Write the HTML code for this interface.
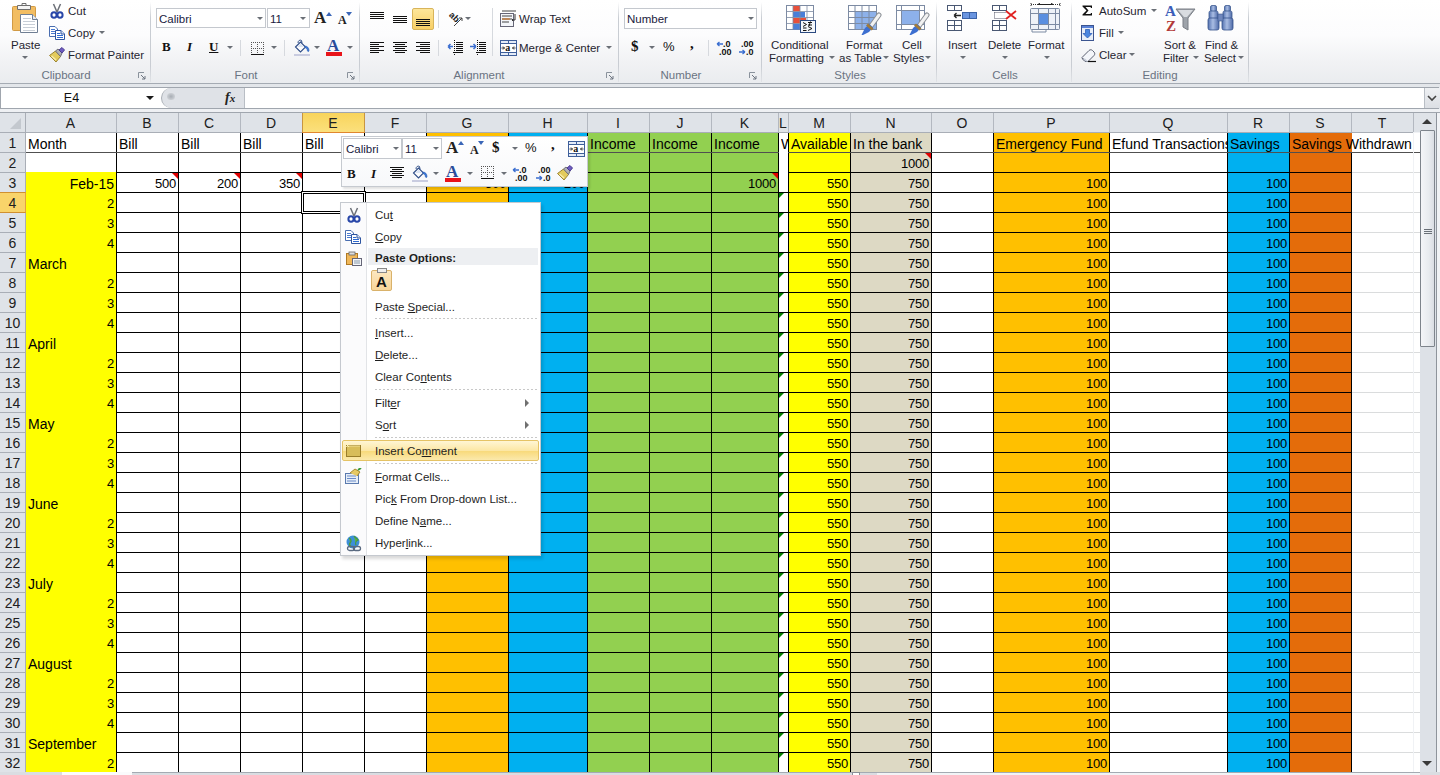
<!DOCTYPE html>
<html><head><meta charset="utf-8"><style>
*{margin:0;padding:0}
html,body{width:1440px;height:775px;overflow:hidden;background:#fff;position:relative;font-family:"Liberation Sans",sans-serif}
div,svg{position:absolute}
.gsep{position:absolute;top:2px;width:1px;height:80px;background:linear-gradient(rgba(200,204,210,0),#C9CDD3 20%,#C9CDD3 80%,rgba(200,204,210,0.3))}
.glbl{position:absolute;top:68px;height:14px;text-align:center;font:11.5px "Liberation Sans",sans-serif;line-height:14px;color:#6A7382;white-space:nowrap}
.lnch{position:absolute;top:72px}
.rt{position:absolute;font:11.5px "Liberation Sans",sans-serif;color:#1F2430;white-space:nowrap;line-height:14px}
.arr{position:absolute;width:0;height:0;border-left:3px solid transparent;border-right:3px solid transparent;border-top:3px solid #6A6F76}
.cbox{position:absolute;background:#fff;border:1px solid #C4C8CE;box-sizing:border-box}
.bsep{position:absolute;width:1px;height:16px;background:#D6D9DE}
.sep{position:absolute;left:375px;width:163px;height:1px;background:repeating-linear-gradient(90deg,#C8C8C8 0 2px,transparent 2px 4px)}
.mi u{text-decoration:underline;text-underline-offset:1px}
.mi{position:absolute;left:375px;font:11.5px "Liberation Sans",sans-serif;color:#1E1E1E;white-space:nowrap;line-height:16px}
</style></head>
<body>
<!-- RIBBON -->
<div style="position:absolute;left:0;top:0;width:1440px;height:83px;background:linear-gradient(#FFFFFF 0px,#FCFCFD 35px,#F1F2F4 62px,#EAECEF 83px)"></div>
<div style="position:absolute;left:0;top:83px;width:1440px;height:1px;background:#A5ABB3"></div>
<div style="position:absolute;left:0;top:84px;width:1440px;height:29px;background:#E3E6EA"></div>
<!-- group separators -->
<div class="gsep" style="left:150px"></div>
<div class="gsep" style="left:359px"></div>
<div class="gsep" style="left:618px"></div>
<div class="gsep" style="left:761px"></div>
<div class="gsep" style="left:936px"></div>
<div class="gsep" style="left:1071px"></div>
<div class="gsep" style="left:1248px"></div>
<!-- group labels -->
<div class="glbl" style="left:40px;width:52px">Clipboard</div>
<div class="glbl" style="left:226px;width:40px">Font</div>
<div class="glbl" style="left:450px;width:58px">Alignment</div>
<div class="glbl" style="left:655px;width:52px">Number</div>
<div class="glbl" style="left:830px;width:40px">Styles</div>
<div class="glbl" style="left:990px;width:30px">Cells</div>
<div class="glbl" style="left:1138px;width:44px">Editing</div>
<!-- launchers -->
<svg class="lnch" style="left:138px" width="8" height="8"><path d="M0.5 6V0.5H6" stroke="#8A929C" fill="none"/><path d="M3 3L7 7M7 4V7H4" stroke="#6D7580" fill="none"/></svg>
<svg class="lnch" style="left:347px" width="8" height="8"><path d="M0.5 6V0.5H6" stroke="#8A929C" fill="none"/><path d="M3 3L7 7M7 4V7H4" stroke="#6D7580" fill="none"/></svg>
<svg class="lnch" style="left:606px" width="8" height="8"><path d="M0.5 6V0.5H6" stroke="#8A929C" fill="none"/><path d="M3 3L7 7M7 4V7H4" stroke="#6D7580" fill="none"/></svg>
<svg class="lnch" style="left:749px" width="8" height="8"><path d="M0.5 6V0.5H6" stroke="#8A929C" fill="none"/><path d="M3 3L7 7M7 4V7H4" stroke="#6D7580" fill="none"/></svg>

<!-- Clipboard -->
<svg style="position:absolute;left:10px;top:2px" width="32" height="32">
 <rect x="2.5" y="4.5" width="23" height="24" rx="1" fill="#F2BD62" stroke="#D19A45"/>
 <path d="M7.5 3.5H20.5V7.5H7.5Z" fill="#F4F4F4" stroke="#6E6E6E"/>
 <path d="M12 3.5V1.5H16V3.5" fill="none" stroke="#6E6E6E"/>
 <path d="M10.5 12.5H22.5L27.5 17.5V30.5H10.5Z" fill="#FFFFFF" stroke="#6F7E93"/>
 <path d="M22.5 12.5V17.5H27.5" fill="#E6EAF0" stroke="#6F7E93"/>
 <path d="M13 16.5H21M13 19.5H25M13 22.5H25M13 25.5H25M13 28.5H25" stroke="#C8CED6"/>
</svg>
<div class="rt" style="left:11px;top:38px">Paste</div>
<div class="arr" style="left:22px;top:56px"></div>
<svg style="position:absolute;left:50px;top:3px" width="14" height="16">
 <path d="M3.5 1L7 9M10.5 1L7 9" stroke="#6C7078" stroke-width="1.5" fill="none"/>
 <ellipse cx="4" cy="12" rx="2.6" ry="2.8" fill="#fff" stroke="#2846A8" stroke-width="2"/>
 <ellipse cx="10" cy="12" rx="2.6" ry="2.8" fill="#fff" stroke="#2846A8" stroke-width="2"/>
</svg>
<div class="rt" style="left:68px;top:4px">Cut</div>
<svg style="position:absolute;left:49px;top:26px" width="16" height="14">
 <path d="M0.5 0.5H6L8.5 3V10.5H0.5Z" fill="#FFFFFF" stroke="#4A6EB0"/>
 <path d="M2 3.5H6M2 5.5H7M2 7.5H7" stroke="#4A7AD0"/>
 <path d="M6.5 4.5H12L15.5 8V13.5H6.5Z" fill="#FFFFFF" stroke="#2E55A0"/>
 <path d="M12 4.5V8H15.5" fill="#DDE6F5" stroke="#2E55A0"/>
 <path d="M8 7.5H11M8 9.5H14M8 11.5H14" stroke="#2F6AD0"/>
</svg>
<div class="rt" style="left:68px;top:26px">Copy</div>
<div class="arr" style="left:99px;top:31px"></div>
<svg style="position:absolute;left:49px;top:47px" width="16" height="16">
 <path d="M0.5 8.5L6.5 4L11.5 9.5L7 15Z" fill="#E3CB5C" stroke="#9C8430"/>
 <path d="M2.5 9L7 13" stroke="#F8EBAA" stroke-width="1.5"/>
 <path d="M6.5 4L9 2L13 6L11.5 9.5Z" fill="#B0B0B8" stroke="#707078"/>
 <path d="M10 3L13 0.5L15.5 3L13 6Z" fill="#6E5CC0" stroke="#4A3A90"/>
</svg>
<div class="rt" style="left:68px;top:48px">Format Painter</div>

<!-- Font group -->
<div class="cbox" style="left:156px;top:8px;width:110px;height:20px"></div>
<div class="cbox" style="left:267px;top:8px;width:43px;height:20px"></div>
<div class="rt" style="left:159px;top:12px;color:#1a1a40">Calibri</div>
<div class="rt" style="left:270px;top:12px;color:#1a1a40">11</div>
<div class="arr" style="left:257px;top:17px"></div>
<div class="arr" style="left:300px;top:17px"></div>
<div style="position:absolute;left:314px;top:8px;font:bold 17px 'Liberation Serif',serif;color:#222">A</div>
<svg style="position:absolute;left:326px;top:12px" width="6" height="4"><path d="M0 4L3 0L6 4Z" fill="#3A66B8"/></svg>
<div style="position:absolute;left:338px;top:13px;font:bold 12px 'Liberation Serif',serif;color:#222">A</div>
<svg style="position:absolute;left:346px;top:12px" width="6" height="4"><path d="M0 0L3 4L6 0Z" fill="#3A66B8"/></svg>
<div style="position:absolute;left:162px;top:39px;font:bold 13px 'Liberation Serif',serif;color:#111">B</div>
<div style="position:absolute;left:187px;top:39px;font:italic bold 13px 'Liberation Serif',serif;color:#111">I</div>
<div style="position:absolute;left:209px;top:39px;font:bold 13px 'Liberation Serif',serif;color:#111;text-decoration:underline">U</div>
<div class="arr" style="left:227px;top:46px"></div>
<div class="bsep" style="left:240px;top:40px"></div>
<svg style="position:absolute;left:251px;top:42px" width="14" height="14">
 <path d="M0.5 0V12M6.5 0V12M12.5 0V12M0 0.5H13M0 6.5H13" stroke="#555" stroke-dasharray="1 1"/>
 <path d="M0 12.5H13" stroke="#111"/>
</svg>
<div class="arr" style="left:271px;top:46px"></div>
<div class="bsep" style="left:284px;top:40px"></div>
<svg style="position:absolute;left:294px;top:39px" width="17" height="17">
 <path d="M1.5 8L6.5 3L11.5 8L6.5 13Z" fill="#FDFDFE" stroke="#2F4E88" stroke-width="1.1"/>
 <path d="M3 8L6.5 4.5L10 8Z" fill="#DDE6F4"/>
 <path d="M4 4C4 1.5 6 0.5 7.5 1.5L8 4" stroke="#2F4E88" fill="none"/>
 <path d="M10.5 7C13.5 7 15 9 15 11.5C15 12.5 14 13 13.5 12C13 11 13.5 9.5 11.5 9Z" fill="#3A78D8" stroke="#2A5BB0" stroke-width="0.6"/>
 <rect x="0" y="15" width="16" height="2" fill="#C9CCE0"/>
</svg>
<div class="arr" style="left:314px;top:46px"></div>
<div style="position:absolute;left:327px;top:36px;font:bold 17px 'Liberation Serif',serif;color:#2A4C9A">A</div>
<div style="position:absolute;left:326px;top:52px;width:16px;height:4px;background:#E8141A"></div>
<div class="arr" style="left:347px;top:46px"></div>

<!-- Alignment -->
<svg style="position:absolute;left:370px;top:12px" width="15" height="8"><path d="M0 0.5H14M0 2.5H14M0 4.5H14M0 6.5H14" stroke="#111"/></svg>
<svg style="position:absolute;left:393px;top:16px" width="15" height="8"><path d="M0 0.5H14M0 2.5H14M0 4.5H14M0 6.5H14" stroke="#111"/></svg>
<div style="position:absolute;left:412px;top:8px;width:20px;height:20px;border:1px solid #D8B45A;border-radius:2px;background:linear-gradient(#FDE69A,#F8CF66)"></div>
<svg style="position:absolute;left:416px;top:19px" width="15" height="8"><path d="M0 0.5H14M0 2.5H14M0 4.5H14M0 6.5H14" stroke="#111"/></svg>
<div class="bsep" style="left:438px;top:10px;height:18px"></div>
<svg style="position:absolute;left:447px;top:11px" width="18" height="16">
 <text x="3" y="5" font-family="Liberation Sans" font-weight="bold" font-size="9" fill="#222" transform="rotate(45 3 3)">ab</text>
 <path d="M7 15L15 7M12 7H15V10" stroke="#444" fill="none"/>
</svg>
<div class="arr" style="left:465px;top:17px"></div>
<div class="bsep" style="left:492px;top:8px;height:48px"></div>
<svg style="position:absolute;left:370px;top:42px" width="15" height="12"><path d="M0 0.5H14M0 2.5H9M0 4.5H14M0 6.5H9M0 8.5H14M0 10.5H9" stroke="#111"/></svg>
<svg style="position:absolute;left:393px;top:42px" width="15" height="12"><path d="M0 0.5H14M2 2.5H12M0 4.5H14M2 6.5H12M0 8.5H14M2 10.5H12" stroke="#111"/></svg>
<svg style="position:absolute;left:416px;top:42px" width="15" height="12"><path d="M0 0.5H14M4 2.5H14M0 4.5H14M4 6.5H14M0 8.5H14M4 10.5H14" stroke="#111"/></svg>
<div class="bsep" style="left:438px;top:40px"></div>
<svg style="position:absolute;left:447px;top:40px" width="17" height="16">
 <path d="M9 2.5H16M9 4.5H16M9 6.5H16M9 8.5H16M9 10.5H16M6 12.5H16" stroke="#111"/>
 <path d="M7.5 0V16" stroke="#111" stroke-dasharray="1 1"/>
 <path d="M1 6.5H6M1 6.5L3.5 4M1 6.5L3.5 9" stroke="#3A6ED0" stroke-width="1.5" fill="none"/>
</svg>
<svg style="position:absolute;left:470px;top:40px" width="17" height="16">
 <path d="M9 2.5H16M9 4.5H16M9 6.5H16M9 8.5H16M9 10.5H16M6 12.5H16" stroke="#111"/>
 <path d="M7.5 0V16" stroke="#111" stroke-dasharray="1 1"/>
 <path d="M0 6.5H6M6 6.5L3.5 4M6 6.5L3.5 9" stroke="#3A6ED0" stroke-width="1.5" fill="none"/>
</svg>
<svg style="position:absolute;left:500px;top:10px" width="18" height="17">
 <rect x="0.5" y="3.5" width="13" height="13" fill="#F4F6FA" stroke="#667"/>
 <path d="M2 1H16M2 6H12M2 9H12M2 12H9" stroke="#444" stroke-width="1.2"/>
 <path d="M2 9H10" stroke="#D07A30" stroke-width="1.2"/>
 <path d="M15 4V10H12M13 9L12 10L13 11" stroke="#333" fill="none"/>
</svg>
<div class="rt" style="left:519px;top:12px">Wrap Text</div>
<svg style="position:absolute;left:500px;top:40px" width="17" height="16">
 <rect x="0.5" y="0.5" width="16" height="15" fill="#E4ECF8" stroke="#3E5F9A"/>
 <path d="M0.5 3.5H16.5M0.5 12.5H16.5M8.5 0.5V3.5M8.5 12.5V15.5" stroke="#3E5F9A"/>
 <rect x="1" y="4" width="15" height="8" fill="#fff"/>
 <text x="5.2" y="10.8" font-family="Liberation Serif" font-weight="bold" font-size="10" fill="#111">a</text>
 <path d="M1.5 8H4.5M3 6.5L4.5 8L3 9.5M15.5 8H12.5M14 6.5L12.5 8L14 9.5" stroke="#222" stroke-width="0.9" fill="none"/>
</svg>
<div class="rt" style="left:519px;top:41px">Merge &amp; Center</div>
<div class="arr" style="left:606px;top:46px"></div>

<!-- Number -->
<div class="cbox" style="left:624px;top:8px;width:133px;height:21px"></div>
<div class="rt" style="left:627px;top:12px;color:#1a1a40">Number</div>
<div class="arr" style="left:748px;top:17px"></div>
<div style="position:absolute;left:631px;top:38px;font:bold 15px 'Liberation Serif',serif;color:#111">$</div>
<div class="arr" style="left:649px;top:46px"></div>
<div style="position:absolute;left:663px;top:39px;font:13px 'Liberation Sans',sans-serif;color:#111">%</div>
<div style="position:absolute;left:690px;top:35px;font:bold 15px 'Liberation Serif',serif;color:#111">,</div>
<div class="bsep" style="left:708px;top:40px"></div>
<svg style="position:absolute;left:716px;top:40px" width="18" height="16">
 <text x="7" y="7" font-family="Liberation Sans" font-weight="bold" font-size="9" fill="#111">.0</text>
 <text x="3" y="15" font-family="Liberation Sans" font-weight="bold" font-size="9" fill="#111">.00</text>
 <path d="M1 4H7M1 4L3.5 2M1 4L3.5 6" stroke="#3A6ED0" stroke-width="1.3" fill="none"/>
</svg>
<svg style="position:absolute;left:738px;top:40px" width="18" height="16">
 <text x="3" y="7" font-family="Liberation Sans" font-weight="bold" font-size="9" fill="#111">.00</text>
 <text x="8" y="15" font-family="Liberation Sans" font-weight="bold" font-size="9" fill="#111">.0</text>
 <path d="M1 12H7M7 12L4.5 10M7 12L4.5 14" stroke="#3A6ED0" stroke-width="1.3" fill="none"/>
</svg>

<!-- Styles -->
<svg style="position:absolute;left:785px;top:5px" width="32" height="29">
 <rect x="1.5" y="0.5" width="27" height="24" fill="#fff" stroke="#7D8BA3"/>
 <rect x="8" y="1" width="7" height="5.5" fill="#E8503A"/>
 <rect x="8" y="7" width="12" height="5.5" fill="#4A7FD8"/>
 <rect x="8" y="13" width="13" height="5.5" fill="#E8503A"/>
 <rect x="8" y="19" width="7" height="5.5" fill="#4A7FD8"/>
 <path d="M8 0.5V24.5M15 0.5V24.5M22 0.5V24.5M1.5 6.5H28.5M1.5 12.5H28.5M1.5 18.5H28.5" stroke="#7D8BA3" stroke-opacity="0.8"/>
 <rect x="15.5" y="15.5" width="15" height="12" fill="#F4F7FB" stroke="#2B4A80"/>
 <path d="M18 17.5L21.5 19.5L18 21.5M18 23H21.5M18 25.5H21.5M23 17.5H27M23 20H27M25.5 16.5L24 21M23 25.5L27 23.5L23 21.5" stroke="#111" stroke-width="1" fill="none"/>
</svg>
<div class="rt" style="left:771px;top:38px">Conditional</div>
<div class="rt" style="left:769px;top:51px">Formatting</div>
<div class="arr" style="left:829px;top:56px"></div>
<svg style="position:absolute;left:848px;top:5px" width="34" height="30">
 <rect x="0.5" y="0.5" width="28" height="24" fill="#fff" stroke="#7D8BA3"/>
 <rect x="7" y="6" width="21" height="18" fill="#8DB1EA"/>
 <path d="M7 0.5V24.5M14 0.5V24.5M21 0.5V24.5M0.5 6.5H28.5M0.5 12.5H28.5M0.5 18.5H28.5" stroke="#7D8BA3"/>
 <path d="M31 10L23 21" stroke="#8A8F96" stroke-width="5" stroke-linecap="round"/>
 <path d="M31 10L23 21" stroke="#F2F2F2" stroke-width="3" stroke-linecap="round"/>
 <path d="M21.5 19L25 22.5L21 27L13 31L17 23Z" fill="#3D6FD0"/>
 <path d="M20 18.5L25.5 23.5L23.5 25.5L18 20.5Z" fill="#A07A3A"/>
</svg>
<div class="rt" style="left:846px;top:38px">Format</div>
<div class="rt" style="left:839px;top:51px">as Table</div>
<div class="arr" style="left:883px;top:56px"></div>
<svg style="position:absolute;left:896px;top:5px" width="34" height="30">
 <rect x="0.5" y="0.5" width="28" height="24" fill="#fff" stroke="#7D8BA3"/>
 <path d="M0.5 5.5H28.5M0.5 19.5H28.5M5.5 0.5V24.5M23.5 0.5V24.5" stroke="#7D8BA3"/>
 <rect x="6" y="6" width="17" height="13" fill="#8DB1EA"/>
 <path d="M31 10L23 21" stroke="#8A8F96" stroke-width="5" stroke-linecap="round"/>
 <path d="M31 10L23 21" stroke="#F2F2F2" stroke-width="3" stroke-linecap="round"/>
 <path d="M21.5 19L25 22.5L21 27L13 31L17 23Z" fill="#3D6FD0"/>
 <path d="M20 18.5L25.5 23.5L23.5 25.5L18 20.5Z" fill="#A07A3A"/>
</svg>
<div class="rt" style="left:902px;top:38px">Cell</div>
<div class="rt" style="left:893px;top:51px">Styles</div>
<div class="arr" style="left:925px;top:56px"></div>

<!-- Cells -->
<svg style="position:absolute;left:947px;top:5px" width="32" height="27">
 <rect x="0.5" y="0.5" width="14" height="5" fill="#fff" stroke="#4A5873"/>
 <path d="M7.5 0.5V5.5" stroke="#4A5873"/>
 <rect x="0.5" y="15.5" width="14" height="10" fill="#fff" stroke="#4A5873"/>
 <path d="M7.5 15.5V25.5M0.5 20.5H14.5" stroke="#4A5873"/>
 <rect x="15.5" y="7.5" width="14" height="6" fill="#6A95E0" stroke="#3B63A8"/>
 <path d="M22.5 7.5V13.5" stroke="#3B63A8"/>
 <path d="M7 10.5H14M7 10.5L9.5 8M7 10.5L9.5 13" stroke="#222" stroke-width="1.3" fill="none"/>
</svg>
<div class="rt" style="left:948px;top:38px">Insert</div>
<div class="arr" style="left:960px;top:56px"></div>
<svg style="position:absolute;left:992px;top:5px" width="26" height="27">
 <rect x="0.5" y="0.5" width="14" height="5" fill="#fff" stroke="#4A5873"/>
 <path d="M7.5 0.5V5.5" stroke="#4A5873"/>
 <rect x="0.5" y="15.5" width="14" height="10" fill="#fff" stroke="#4A5873"/>
 <path d="M7.5 15.5V25.5M0.5 20.5H14.5" stroke="#4A5873"/>
 <path d="M2.5 7.5H14.5M2.5 13.5H14.5M2.5 7.5V13.5" stroke="#556" stroke-dasharray="1 1" fill="none"/>
 <path d="M14 6L24 14M24 6L14 14" stroke="#E02020" stroke-width="1.8"/>
</svg>
<div class="rt" style="left:988px;top:38px">Delete</div>
<div class="arr" style="left:1002px;top:56px"></div>
<svg style="position:absolute;left:1030px;top:3px" width="32" height="30">
 <path d="M1 1.5H30M1 0V3M30 0V3" stroke="#333" stroke-dasharray="1 1"/>
 <path d="M8 1.5H23M8 1.5L10 0M23 1.5L21 0" stroke="#222"/>
 <rect x="0.5" y="5.5" width="29" height="21" fill="#EEF2F8" stroke="#7D8BA3" rx="1"/>
 <path d="M8.5 5.5V26.5M18.5 5.5V26.5M25.5 5.5V26.5M0.5 10.5H29.5M0.5 21.5H29.5" stroke="#7D8BA3"/>
 <rect x="9" y="11" width="9" height="10" fill="#5A8FE0"/>
 <path d="M2 27V29H16V27" stroke="#7D8BA3" fill="none"/>
</svg>
<div class="rt" style="left:1028px;top:38px">Format</div>
<div class="arr" style="left:1044px;top:56px"></div>

<!-- Editing -->
<svg style="position:absolute;left:1082px;top:5px" width="11" height="11"><path d="M0.5 0.5H10V3H9L8.5 2H3.5L6.5 5.5L3.5 9H8.5L9 8H10V10.5H0.5V9.5L4.5 5.5L0.5 1.5Z" fill="#111"/></svg>
<div class="rt" style="left:1099px;top:4px">AutoSum</div>
<div class="arr" style="left:1151px;top:9px"></div>
<svg style="position:absolute;left:1081px;top:25px" width="14" height="17">
 <rect x="0.5" y="0.5" width="12" height="15" fill="#E8EEF8" stroke="#3C5590"/>
 <rect x="1" y="1" width="11" height="2" fill="#5A82D8"/>
 <path d="M4.5 4.5H8.5V8.5H11L6.5 13L2 8.5H4.5Z" fill="#4A86E0" stroke="#2E5EB8" stroke-width="0.8"/>
</svg>
<div class="rt" style="left:1099px;top:26px">Fill</div>
<div class="arr" style="left:1118px;top:31px"></div>
<svg style="position:absolute;left:1081px;top:48px" width="16" height="15">
 <path d="M1 9.5L8 2.5C9 1.5 10.5 1.5 11.5 2.5L13 4C14 5 14 6.5 13 7.5L7 13.5H4L1.5 11Z" fill="#F4F6FA" stroke="#5A6070"/>
 <path d="M1.5 10L4.5 13" stroke="#5A6070"/>
 <path d="M2 11L5 13.5H7L4 10.5Z" fill="#C8CEDA"/>
 <path d="M7 13.5H15" stroke="#111" stroke-width="1.2"/>
</svg>
<div class="rt" style="left:1099px;top:48px">Clear</div>
<div class="arr" style="left:1129px;top:53px"></div>
<svg style="position:absolute;left:1165px;top:3px" width="32" height="30">
 <text x="0" y="13" font-family="Liberation Serif" font-weight="bold" font-size="15" fill="#3A5DB8">A</text>
 <text x="1" y="28" font-family="Liberation Serif" font-weight="bold" font-size="15" fill="#B23A3A">Z</text>
 <path d="M11 6H30L23 15V27L18 24V15Z" fill="#9EA3AA" stroke="#7A7F86"/>
 <path d="M13 7H28L22 14H19Z" fill="#D9DCE0"/>
</svg>
<div class="rt" style="left:1164px;top:38px">Sort &amp;</div>
<div class="rt" style="left:1163px;top:51px">Filter</div>
<div class="arr" style="left:1193px;top:56px"></div>
<svg style="position:absolute;left:1207px;top:5px" width="30" height="26">
 <defs><linearGradient id="bino" x1="0" x2="1"><stop offset="0" stop-color="#5472B0"/><stop offset="0.45" stop-color="#A9BDE3"/><stop offset="1" stop-color="#4E6AA8"/></linearGradient></defs>
 <rect x="3.5" y="0.5" width="6" height="6" rx="1.5" fill="url(#bino)" stroke="#3D5A90" stroke-width="0.8"/>
 <rect x="17.5" y="0.5" width="6" height="6" rx="1.5" fill="url(#bino)" stroke="#3D5A90" stroke-width="0.8"/>
 <rect x="2" y="6" width="9" height="8" rx="1.5" fill="url(#bino)" stroke="#3D5A90" stroke-width="0.8"/>
 <rect x="16" y="6" width="9" height="8" rx="1.5" fill="url(#bino)" stroke="#3D5A90" stroke-width="0.8"/>
 <rect x="1" y="13" width="11" height="12" rx="2" fill="url(#bino)" stroke="#33508A" stroke-width="0.8"/>
 <rect x="15" y="13" width="11" height="12" rx="2" fill="url(#bino)" stroke="#33508A" stroke-width="0.8"/>
 <rect x="11" y="9" width="5" height="7" fill="#6F87BC" stroke="#3D5A90" stroke-width="0.6"/>
</svg>
<div class="rt" style="left:1205px;top:38px">Find &amp;</div>
<div class="rt" style="left:1204px;top:51px">Select</div>
<div class="arr" style="left:1238px;top:56px"></div>

<!-- FORMULA BAR -->
<div style="position:absolute;left:0;top:87px;width:1439px;height:22px;background:#fff;border-top:1px solid #A0A6AE;border-bottom:1px solid #A0A6AE;box-sizing:border-box"></div>
<div style="position:absolute;left:0;top:87px;width:1px;height:26px;background:#A0A6AE"></div>
<div style="position:absolute;left:0;top:109px;width:1440px;height:3px;background:#EEF0F3"></div>
<div style="position:absolute;left:0;top:112px;width:1440px;height:1px;background:#A0A6AE"></div>
<div style="position:absolute;left:1px;top:88px;width:159px;height:20px;text-align:center;font:12.5px 'Liberation Sans',sans-serif;line-height:20px;color:#111;padding-right:18px;box-sizing:border-box">E4</div>
<svg style="position:absolute;left:146px;top:96px" width="8" height="4"><path d="M0 0H8L4 4Z" fill="#1a1a1a"/></svg>
<div style="position:absolute;left:161px;top:88px;width:84px;height:20px;background:#DFE2E7;border-radius:10px 0 0 10px;border-left:1px solid #A9AEB5;border-right:1px solid #B9BEC5;box-sizing:border-box"></div>
<div style="position:absolute;left:167px;top:93px;width:8px;height:7px;border-radius:4px;background:radial-gradient(#A8ADB4,#DCDFE3)"></div>
<div style="position:absolute;left:225px;top:88px;font:italic bold 14px 'Liberation Serif',serif;color:#222;line-height:20px">f<span style="font-size:11px">x</span></div>
<div style="position:absolute;left:1424px;top:88px;width:15px;height:20px;background:linear-gradient(#EEF0F3,#DCDFE4);border-left:1px solid #B9BEC5"></div>
<svg style="position:absolute;left:1427px;top:95px" width="10" height="7"><path d="M1 1L5 5L9 1" stroke="#444" stroke-width="1.6" fill="none"/></svg>

<div style="position:absolute;left:26px;top:133px;width:1394px;height:642px;background:#fff"></div>
<div style="position:absolute;left:26px;top:152px;width:1394px;height:1px;background:#DADCDD"></div>
<div style="position:absolute;left:26px;top:172px;width:1394px;height:1px;background:#DADCDD"></div>
<div style="position:absolute;left:26px;top:192px;width:1394px;height:1px;background:#DADCDD"></div>
<div style="position:absolute;left:26px;top:212px;width:1394px;height:1px;background:#DADCDD"></div>
<div style="position:absolute;left:26px;top:232px;width:1394px;height:1px;background:#DADCDD"></div>
<div style="position:absolute;left:26px;top:252px;width:1394px;height:1px;background:#DADCDD"></div>
<div style="position:absolute;left:26px;top:272px;width:1394px;height:1px;background:#DADCDD"></div>
<div style="position:absolute;left:26px;top:292px;width:1394px;height:1px;background:#DADCDD"></div>
<div style="position:absolute;left:26px;top:312px;width:1394px;height:1px;background:#DADCDD"></div>
<div style="position:absolute;left:26px;top:332px;width:1394px;height:1px;background:#DADCDD"></div>
<div style="position:absolute;left:26px;top:352px;width:1394px;height:1px;background:#DADCDD"></div>
<div style="position:absolute;left:26px;top:372px;width:1394px;height:1px;background:#DADCDD"></div>
<div style="position:absolute;left:26px;top:392px;width:1394px;height:1px;background:#DADCDD"></div>
<div style="position:absolute;left:26px;top:412px;width:1394px;height:1px;background:#DADCDD"></div>
<div style="position:absolute;left:26px;top:432px;width:1394px;height:1px;background:#DADCDD"></div>
<div style="position:absolute;left:26px;top:452px;width:1394px;height:1px;background:#DADCDD"></div>
<div style="position:absolute;left:26px;top:472px;width:1394px;height:1px;background:#DADCDD"></div>
<div style="position:absolute;left:26px;top:492px;width:1394px;height:1px;background:#DADCDD"></div>
<div style="position:absolute;left:26px;top:512px;width:1394px;height:1px;background:#DADCDD"></div>
<div style="position:absolute;left:26px;top:532px;width:1394px;height:1px;background:#DADCDD"></div>
<div style="position:absolute;left:26px;top:552px;width:1394px;height:1px;background:#DADCDD"></div>
<div style="position:absolute;left:26px;top:572px;width:1394px;height:1px;background:#DADCDD"></div>
<div style="position:absolute;left:26px;top:592px;width:1394px;height:1px;background:#DADCDD"></div>
<div style="position:absolute;left:26px;top:612px;width:1394px;height:1px;background:#DADCDD"></div>
<div style="position:absolute;left:26px;top:632px;width:1394px;height:1px;background:#DADCDD"></div>
<div style="position:absolute;left:26px;top:652px;width:1394px;height:1px;background:#DADCDD"></div>
<div style="position:absolute;left:26px;top:672px;width:1394px;height:1px;background:#DADCDD"></div>
<div style="position:absolute;left:26px;top:692px;width:1394px;height:1px;background:#DADCDD"></div>
<div style="position:absolute;left:26px;top:712px;width:1394px;height:1px;background:#DADCDD"></div>
<div style="position:absolute;left:26px;top:732px;width:1394px;height:1px;background:#DADCDD"></div>
<div style="position:absolute;left:26px;top:752px;width:1394px;height:1px;background:#DADCDD"></div>
<div style="position:absolute;left:26px;top:772px;width:1394px;height:1px;background:#DADCDD"></div>
<div style="position:absolute;left:116px;top:133px;width:1px;height:642px;background:#DADCDD"></div>
<div style="position:absolute;left:178px;top:133px;width:1px;height:642px;background:#DADCDD"></div>
<div style="position:absolute;left:240px;top:133px;width:1px;height:642px;background:#DADCDD"></div>
<div style="position:absolute;left:302px;top:133px;width:1px;height:642px;background:#DADCDD"></div>
<div style="position:absolute;left:364px;top:133px;width:1px;height:642px;background:#DADCDD"></div>
<div style="position:absolute;left:426px;top:133px;width:1px;height:642px;background:#DADCDD"></div>
<div style="position:absolute;left:508px;top:133px;width:1px;height:642px;background:#DADCDD"></div>
<div style="position:absolute;left:587px;top:133px;width:1px;height:642px;background:#DADCDD"></div>
<div style="position:absolute;left:649px;top:133px;width:1px;height:642px;background:#DADCDD"></div>
<div style="position:absolute;left:711px;top:133px;width:1px;height:642px;background:#DADCDD"></div>
<div style="position:absolute;left:778px;top:133px;width:1px;height:642px;background:#DADCDD"></div>
<div style="position:absolute;left:788px;top:133px;width:1px;height:642px;background:#DADCDD"></div>
<div style="position:absolute;left:850px;top:133px;width:1px;height:642px;background:#DADCDD"></div>
<div style="position:absolute;left:931px;top:133px;width:1px;height:642px;background:#DADCDD"></div>
<div style="position:absolute;left:993px;top:133px;width:1px;height:642px;background:#DADCDD"></div>
<div style="position:absolute;left:1109px;top:133px;width:1px;height:642px;background:#DADCDD"></div>
<div style="position:absolute;left:1227px;top:133px;width:1px;height:642px;background:#DADCDD"></div>
<div style="position:absolute;left:1289px;top:133px;width:1px;height:642px;background:#DADCDD"></div>
<div style="position:absolute;left:1351px;top:133px;width:1px;height:642px;background:#DADCDD"></div>
<div style="position:absolute;left:1413px;top:133px;width:1px;height:642px;background:#DADCDD"></div>
<div style="position:absolute;left:1420px;top:133px;width:1px;height:642px;background:#DADCDD"></div>
<div style="position:absolute;left:26px;top:172px;width:91px;height:642px;background:#FFFF00"></div>
<div style="position:absolute;left:26px;top:133px;width:90px;height:39px;background:#fff"></div>
<div style="position:absolute;left:426px;top:133px;width:83px;height:642px;background:#FFC000"></div>
<div style="position:absolute;left:508px;top:133px;width:80px;height:642px;background:#00B0F0"></div>
<div style="position:absolute;left:587px;top:133px;width:63px;height:642px;background:#92D050"></div>
<div style="position:absolute;left:649px;top:133px;width:63px;height:642px;background:#92D050"></div>
<div style="position:absolute;left:711px;top:133px;width:68px;height:642px;background:#92D050"></div>
<div style="position:absolute;left:788px;top:133px;width:63px;height:642px;background:#FFFF00"></div>
<div style="position:absolute;left:850px;top:133px;width:82px;height:642px;background:#DDD9C4"></div>
<div style="position:absolute;left:993px;top:133px;width:117px;height:642px;background:#FFC000"></div>
<div style="position:absolute;left:1227px;top:133px;width:63px;height:642px;background:#00B0F0"></div>
<div style="position:absolute;left:1289px;top:133px;width:63px;height:642px;background:#E46C0A"></div>
<div style="position:absolute;left:116px;top:133px;width:63px;height:642px;background:#fff"></div>
<div style="position:absolute;left:178px;top:133px;width:63px;height:642px;background:#fff"></div>
<div style="position:absolute;left:240px;top:133px;width:63px;height:642px;background:#fff"></div>
<div style="position:absolute;left:302px;top:133px;width:63px;height:642px;background:#fff"></div>
<div style="position:absolute;left:364px;top:133px;width:63px;height:642px;background:#fff"></div>
<div style="position:absolute;left:778px;top:133px;width:11px;height:642px;background:#fff"></div>
<div style="position:absolute;left:931px;top:133px;width:63px;height:642px;background:#fff"></div>
<div style="position:absolute;left:1109px;top:133px;width:119px;height:642px;background:#fff"></div>
<div style="position:absolute;left:116px;top:133px;width:1px;height:642px;background:#000"></div>
<div style="position:absolute;left:178px;top:133px;width:1px;height:642px;background:#000"></div>
<div style="position:absolute;left:240px;top:133px;width:1px;height:642px;background:#000"></div>
<div style="position:absolute;left:302px;top:133px;width:1px;height:642px;background:#000"></div>
<div style="position:absolute;left:364px;top:133px;width:1px;height:642px;background:#000"></div>
<div style="position:absolute;left:426px;top:133px;width:1px;height:642px;background:#000"></div>
<div style="position:absolute;left:508px;top:133px;width:1px;height:642px;background:#000"></div>
<div style="position:absolute;left:587px;top:133px;width:1px;height:642px;background:#000"></div>
<div style="position:absolute;left:649px;top:133px;width:1px;height:642px;background:#000"></div>
<div style="position:absolute;left:711px;top:133px;width:1px;height:642px;background:#000"></div>
<div style="position:absolute;left:778px;top:133px;width:1px;height:642px;background:#000"></div>
<div style="position:absolute;left:788px;top:133px;width:1px;height:642px;background:#000"></div>
<div style="position:absolute;left:850px;top:133px;width:1px;height:642px;background:#000"></div>
<div style="position:absolute;left:931px;top:133px;width:1px;height:642px;background:#000"></div>
<div style="position:absolute;left:993px;top:133px;width:1px;height:642px;background:#000"></div>
<div style="position:absolute;left:1109px;top:133px;width:1px;height:642px;background:#000"></div>
<div style="position:absolute;left:1227px;top:133px;width:1px;height:642px;background:#000"></div>
<div style="position:absolute;left:1289px;top:133px;width:1px;height:642px;background:#000"></div>
<div style="position:absolute;left:1351px;top:153px;width:1px;height:622px;background:#000"></div>
<div style="position:absolute;left:26px;top:152px;width:1394px;height:1px;background:#505050"></div>
<div style="position:absolute;left:116px;top:172px;width:1236px;height:1px;background:#000"></div>
<div style="position:absolute;left:116px;top:192px;width:1236px;height:1px;background:#000"></div>
<div style="position:absolute;left:116px;top:212px;width:1236px;height:1px;background:#000"></div>
<div style="position:absolute;left:116px;top:232px;width:1236px;height:1px;background:#000"></div>
<div style="position:absolute;left:116px;top:252px;width:1236px;height:1px;background:#000"></div>
<div style="position:absolute;left:116px;top:272px;width:1236px;height:1px;background:#000"></div>
<div style="position:absolute;left:116px;top:292px;width:1236px;height:1px;background:#000"></div>
<div style="position:absolute;left:116px;top:312px;width:1236px;height:1px;background:#000"></div>
<div style="position:absolute;left:116px;top:332px;width:1236px;height:1px;background:#000"></div>
<div style="position:absolute;left:116px;top:352px;width:1236px;height:1px;background:#000"></div>
<div style="position:absolute;left:116px;top:372px;width:1236px;height:1px;background:#000"></div>
<div style="position:absolute;left:116px;top:392px;width:1236px;height:1px;background:#000"></div>
<div style="position:absolute;left:116px;top:412px;width:1236px;height:1px;background:#000"></div>
<div style="position:absolute;left:116px;top:432px;width:1236px;height:1px;background:#000"></div>
<div style="position:absolute;left:116px;top:452px;width:1236px;height:1px;background:#000"></div>
<div style="position:absolute;left:116px;top:472px;width:1236px;height:1px;background:#000"></div>
<div style="position:absolute;left:116px;top:492px;width:1236px;height:1px;background:#000"></div>
<div style="position:absolute;left:116px;top:512px;width:1236px;height:1px;background:#000"></div>
<div style="position:absolute;left:116px;top:532px;width:1236px;height:1px;background:#000"></div>
<div style="position:absolute;left:116px;top:552px;width:1236px;height:1px;background:#000"></div>
<div style="position:absolute;left:116px;top:572px;width:1236px;height:1px;background:#000"></div>
<div style="position:absolute;left:116px;top:592px;width:1236px;height:1px;background:#000"></div>
<div style="position:absolute;left:116px;top:612px;width:1236px;height:1px;background:#000"></div>
<div style="position:absolute;left:116px;top:632px;width:1236px;height:1px;background:#000"></div>
<div style="position:absolute;left:116px;top:652px;width:1236px;height:1px;background:#000"></div>
<div style="position:absolute;left:116px;top:672px;width:1236px;height:1px;background:#000"></div>
<div style="position:absolute;left:116px;top:692px;width:1236px;height:1px;background:#000"></div>
<div style="position:absolute;left:116px;top:712px;width:1236px;height:1px;background:#000"></div>
<div style="position:absolute;left:116px;top:732px;width:1236px;height:1px;background:#000"></div>
<div style="position:absolute;left:116px;top:752px;width:1236px;height:1px;background:#000"></div>
<div style="position:absolute;left:779px;top:133px;width:9px;height:59px;background:#fff"></div>
<div style="position:absolute;left:28px;top:133px;height:19px;font:14px 'Liberation Sans',sans-serif;line-height:22px;color:#000;white-space:nowrap">Month</div>
<div style="position:absolute;left:119px;top:133px;height:19px;font:14px 'Liberation Sans',sans-serif;line-height:22px;color:#000;white-space:nowrap">Bill</div>
<div style="position:absolute;left:181px;top:133px;height:19px;font:14px 'Liberation Sans',sans-serif;line-height:22px;color:#000;white-space:nowrap">Bill</div>
<div style="position:absolute;left:243px;top:133px;height:19px;font:14px 'Liberation Sans',sans-serif;line-height:22px;color:#000;white-space:nowrap">Bill</div>
<div style="position:absolute;left:305px;top:133px;height:19px;font:14px 'Liberation Sans',sans-serif;line-height:22px;color:#000;white-space:nowrap">Bill</div>
<div style="position:absolute;left:367px;top:133px;height:19px;font:14px 'Liberation Sans',sans-serif;line-height:22px;color:#000;white-space:nowrap">Bill</div>
<div style="position:absolute;left:429px;top:133px;height:19px;font:14px 'Liberation Sans',sans-serif;line-height:22px;color:#000;white-space:nowrap">Bill</div>
<div style="position:absolute;left:511px;top:133px;height:19px;font:14px 'Liberation Sans',sans-serif;line-height:22px;color:#000;white-space:nowrap">Income</div>
<div style="position:absolute;left:590px;top:133px;height:19px;font:14px 'Liberation Sans',sans-serif;line-height:22px;color:#000;white-space:nowrap">Income</div>
<div style="position:absolute;left:652px;top:133px;height:19px;font:14px 'Liberation Sans',sans-serif;line-height:22px;color:#000;white-space:nowrap">Income</div>
<div style="position:absolute;left:714px;top:133px;height:19px;font:14px 'Liberation Sans',sans-serif;line-height:22px;color:#000;white-space:nowrap">Income</div>
<div style="position:absolute;left:781px;top:133px;height:19px;font:14px 'Liberation Sans',sans-serif;line-height:22px;color:#000;white-space:nowrap"><span style="display:inline-block;width:8px;overflow:hidden;vertical-align:top">W</span></div>
<div style="position:absolute;left:791px;top:133px;height:19px;font:14px 'Liberation Sans',sans-serif;line-height:22px;color:#000;white-space:nowrap">Available</div>
<div style="position:absolute;left:853px;top:133px;height:19px;font:14px 'Liberation Sans',sans-serif;line-height:22px;color:#000;white-space:nowrap">In the bank</div>
<div style="position:absolute;left:996px;top:133px;height:19px;font:14px 'Liberation Sans',sans-serif;line-height:22px;color:#000;white-space:nowrap">Emergency Fund</div>
<div style="position:absolute;left:1112px;top:133px;height:19px;font:14px 'Liberation Sans',sans-serif;line-height:22px;color:#000;white-space:nowrap"><span style="display:inline-block;width:115px;overflow:hidden;vertical-align:top">Efund Transactions</span></div>
<div style="position:absolute;left:1230px;top:133px;height:19px;font:14px 'Liberation Sans',sans-serif;line-height:22px;color:#000;white-space:nowrap">Savings</div>
<div style="position:absolute;left:1292px;top:133px;height:19px;font:14px 'Liberation Sans',sans-serif;line-height:22px;color:#000;white-space:nowrap">Savings Withdrawn</div>
<div style="position:absolute;left:25px;width:89px;top:173px;height:19px;font:14px 'Liberation Sans',sans-serif;line-height:22px;text-align:right;white-space:nowrap">Feb-15</div>
<div style="position:absolute;left:116px;width:60px;top:173px;height:19px;font:13px 'Liberation Sans',sans-serif;line-height:22px;text-align:right;white-space:nowrap;letter-spacing:-0.2px">500</div>
<div style="position:absolute;left:178px;width:60px;top:173px;height:19px;font:13px 'Liberation Sans',sans-serif;line-height:22px;text-align:right;white-space:nowrap;letter-spacing:-0.2px">200</div>
<div style="position:absolute;left:240px;width:60px;top:173px;height:19px;font:13px 'Liberation Sans',sans-serif;line-height:22px;text-align:right;white-space:nowrap;letter-spacing:-0.2px">350</div>
<div style="position:absolute;left:426px;width:80px;top:173px;height:19px;font:13px 'Liberation Sans',sans-serif;line-height:22px;text-align:right;white-space:nowrap;letter-spacing:-0.2px">500</div>
<div style="position:absolute;left:508px;width:77px;top:173px;height:19px;font:13px 'Liberation Sans',sans-serif;line-height:22px;text-align:right;white-space:nowrap;letter-spacing:-0.2px">200</div>
<div style="position:absolute;left:711px;width:65px;top:173px;height:19px;font:13px 'Liberation Sans',sans-serif;line-height:22px;text-align:right;white-space:nowrap;letter-spacing:-0.2px">1000</div>
<div style="position:absolute;left:850px;width:79px;top:153px;height:19px;font:13px 'Liberation Sans',sans-serif;line-height:22px;text-align:right;white-space:nowrap;letter-spacing:-0.2px">1000</div>
<div style="position:absolute;left:25px;width:89px;top:193px;height:19px;font:13px 'Liberation Sans',sans-serif;line-height:22px;text-align:right;white-space:nowrap;letter-spacing:-0.2px">2</div>
<div style="position:absolute;left:25px;width:89px;top:213px;height:19px;font:13px 'Liberation Sans',sans-serif;line-height:22px;text-align:right;white-space:nowrap;letter-spacing:-0.2px">3</div>
<div style="position:absolute;left:25px;width:89px;top:233px;height:19px;font:13px 'Liberation Sans',sans-serif;line-height:22px;text-align:right;white-space:nowrap;letter-spacing:-0.2px">4</div>
<div style="position:absolute;left:28px;top:253px;height:19px;font:14px 'Liberation Sans',sans-serif;line-height:22px;color:#000;white-space:nowrap">March</div>
<div style="position:absolute;left:25px;width:89px;top:273px;height:19px;font:13px 'Liberation Sans',sans-serif;line-height:22px;text-align:right;white-space:nowrap;letter-spacing:-0.2px">2</div>
<div style="position:absolute;left:25px;width:89px;top:293px;height:19px;font:13px 'Liberation Sans',sans-serif;line-height:22px;text-align:right;white-space:nowrap;letter-spacing:-0.2px">3</div>
<div style="position:absolute;left:25px;width:89px;top:313px;height:19px;font:13px 'Liberation Sans',sans-serif;line-height:22px;text-align:right;white-space:nowrap;letter-spacing:-0.2px">4</div>
<div style="position:absolute;left:28px;top:333px;height:19px;font:14px 'Liberation Sans',sans-serif;line-height:22px;color:#000;white-space:nowrap">April</div>
<div style="position:absolute;left:25px;width:89px;top:353px;height:19px;font:13px 'Liberation Sans',sans-serif;line-height:22px;text-align:right;white-space:nowrap;letter-spacing:-0.2px">2</div>
<div style="position:absolute;left:25px;width:89px;top:373px;height:19px;font:13px 'Liberation Sans',sans-serif;line-height:22px;text-align:right;white-space:nowrap;letter-spacing:-0.2px">3</div>
<div style="position:absolute;left:25px;width:89px;top:393px;height:19px;font:13px 'Liberation Sans',sans-serif;line-height:22px;text-align:right;white-space:nowrap;letter-spacing:-0.2px">4</div>
<div style="position:absolute;left:28px;top:413px;height:19px;font:14px 'Liberation Sans',sans-serif;line-height:22px;color:#000;white-space:nowrap">May</div>
<div style="position:absolute;left:25px;width:89px;top:433px;height:19px;font:13px 'Liberation Sans',sans-serif;line-height:22px;text-align:right;white-space:nowrap;letter-spacing:-0.2px">2</div>
<div style="position:absolute;left:25px;width:89px;top:453px;height:19px;font:13px 'Liberation Sans',sans-serif;line-height:22px;text-align:right;white-space:nowrap;letter-spacing:-0.2px">3</div>
<div style="position:absolute;left:25px;width:89px;top:473px;height:19px;font:13px 'Liberation Sans',sans-serif;line-height:22px;text-align:right;white-space:nowrap;letter-spacing:-0.2px">4</div>
<div style="position:absolute;left:28px;top:493px;height:19px;font:14px 'Liberation Sans',sans-serif;line-height:22px;color:#000;white-space:nowrap">June</div>
<div style="position:absolute;left:25px;width:89px;top:513px;height:19px;font:13px 'Liberation Sans',sans-serif;line-height:22px;text-align:right;white-space:nowrap;letter-spacing:-0.2px">2</div>
<div style="position:absolute;left:25px;width:89px;top:533px;height:19px;font:13px 'Liberation Sans',sans-serif;line-height:22px;text-align:right;white-space:nowrap;letter-spacing:-0.2px">3</div>
<div style="position:absolute;left:25px;width:89px;top:553px;height:19px;font:13px 'Liberation Sans',sans-serif;line-height:22px;text-align:right;white-space:nowrap;letter-spacing:-0.2px">4</div>
<div style="position:absolute;left:28px;top:573px;height:19px;font:14px 'Liberation Sans',sans-serif;line-height:22px;color:#000;white-space:nowrap">July</div>
<div style="position:absolute;left:25px;width:89px;top:593px;height:19px;font:13px 'Liberation Sans',sans-serif;line-height:22px;text-align:right;white-space:nowrap;letter-spacing:-0.2px">2</div>
<div style="position:absolute;left:25px;width:89px;top:613px;height:19px;font:13px 'Liberation Sans',sans-serif;line-height:22px;text-align:right;white-space:nowrap;letter-spacing:-0.2px">3</div>
<div style="position:absolute;left:25px;width:89px;top:633px;height:19px;font:13px 'Liberation Sans',sans-serif;line-height:22px;text-align:right;white-space:nowrap;letter-spacing:-0.2px">4</div>
<div style="position:absolute;left:28px;top:653px;height:19px;font:14px 'Liberation Sans',sans-serif;line-height:22px;color:#000;white-space:nowrap">August</div>
<div style="position:absolute;left:25px;width:89px;top:673px;height:19px;font:13px 'Liberation Sans',sans-serif;line-height:22px;text-align:right;white-space:nowrap;letter-spacing:-0.2px">2</div>
<div style="position:absolute;left:25px;width:89px;top:693px;height:19px;font:13px 'Liberation Sans',sans-serif;line-height:22px;text-align:right;white-space:nowrap;letter-spacing:-0.2px">3</div>
<div style="position:absolute;left:25px;width:89px;top:713px;height:19px;font:13px 'Liberation Sans',sans-serif;line-height:22px;text-align:right;white-space:nowrap;letter-spacing:-0.2px">4</div>
<div style="position:absolute;left:28px;top:733px;height:19px;font:14px 'Liberation Sans',sans-serif;line-height:22px;color:#000;white-space:nowrap">September</div>
<div style="position:absolute;left:25px;width:89px;top:753px;height:19px;font:13px 'Liberation Sans',sans-serif;line-height:22px;text-align:right;white-space:nowrap;letter-spacing:-0.2px">2</div>
<div style="position:absolute;left:788px;width:60px;top:173px;height:19px;font:13px 'Liberation Sans',sans-serif;line-height:22px;text-align:right;white-space:nowrap;letter-spacing:-0.2px">550</div>
<div style="position:absolute;left:850px;width:79px;top:173px;height:19px;font:13px 'Liberation Sans',sans-serif;line-height:22px;text-align:right;white-space:nowrap;letter-spacing:-0.2px">750</div>
<div style="position:absolute;left:993px;width:114px;top:173px;height:19px;font:13px 'Liberation Sans',sans-serif;line-height:22px;text-align:right;white-space:nowrap;letter-spacing:-0.2px">100</div>
<div style="position:absolute;left:1227px;width:60px;top:173px;height:19px;font:13px 'Liberation Sans',sans-serif;line-height:22px;text-align:right;white-space:nowrap;letter-spacing:-0.2px">100</div>
<div style="position:absolute;left:788px;width:60px;top:193px;height:19px;font:13px 'Liberation Sans',sans-serif;line-height:22px;text-align:right;white-space:nowrap;letter-spacing:-0.2px">550</div>
<div style="position:absolute;left:850px;width:79px;top:193px;height:19px;font:13px 'Liberation Sans',sans-serif;line-height:22px;text-align:right;white-space:nowrap;letter-spacing:-0.2px">750</div>
<div style="position:absolute;left:993px;width:114px;top:193px;height:19px;font:13px 'Liberation Sans',sans-serif;line-height:22px;text-align:right;white-space:nowrap;letter-spacing:-0.2px">100</div>
<div style="position:absolute;left:1227px;width:60px;top:193px;height:19px;font:13px 'Liberation Sans',sans-serif;line-height:22px;text-align:right;white-space:nowrap;letter-spacing:-0.2px">100</div>
<div style="position:absolute;left:788px;width:60px;top:213px;height:19px;font:13px 'Liberation Sans',sans-serif;line-height:22px;text-align:right;white-space:nowrap;letter-spacing:-0.2px">550</div>
<div style="position:absolute;left:850px;width:79px;top:213px;height:19px;font:13px 'Liberation Sans',sans-serif;line-height:22px;text-align:right;white-space:nowrap;letter-spacing:-0.2px">750</div>
<div style="position:absolute;left:993px;width:114px;top:213px;height:19px;font:13px 'Liberation Sans',sans-serif;line-height:22px;text-align:right;white-space:nowrap;letter-spacing:-0.2px">100</div>
<div style="position:absolute;left:1227px;width:60px;top:213px;height:19px;font:13px 'Liberation Sans',sans-serif;line-height:22px;text-align:right;white-space:nowrap;letter-spacing:-0.2px">100</div>
<div style="position:absolute;left:788px;width:60px;top:233px;height:19px;font:13px 'Liberation Sans',sans-serif;line-height:22px;text-align:right;white-space:nowrap;letter-spacing:-0.2px">550</div>
<div style="position:absolute;left:850px;width:79px;top:233px;height:19px;font:13px 'Liberation Sans',sans-serif;line-height:22px;text-align:right;white-space:nowrap;letter-spacing:-0.2px">750</div>
<div style="position:absolute;left:993px;width:114px;top:233px;height:19px;font:13px 'Liberation Sans',sans-serif;line-height:22px;text-align:right;white-space:nowrap;letter-spacing:-0.2px">100</div>
<div style="position:absolute;left:1227px;width:60px;top:233px;height:19px;font:13px 'Liberation Sans',sans-serif;line-height:22px;text-align:right;white-space:nowrap;letter-spacing:-0.2px">100</div>
<div style="position:absolute;left:788px;width:60px;top:253px;height:19px;font:13px 'Liberation Sans',sans-serif;line-height:22px;text-align:right;white-space:nowrap;letter-spacing:-0.2px">550</div>
<div style="position:absolute;left:850px;width:79px;top:253px;height:19px;font:13px 'Liberation Sans',sans-serif;line-height:22px;text-align:right;white-space:nowrap;letter-spacing:-0.2px">750</div>
<div style="position:absolute;left:993px;width:114px;top:253px;height:19px;font:13px 'Liberation Sans',sans-serif;line-height:22px;text-align:right;white-space:nowrap;letter-spacing:-0.2px">100</div>
<div style="position:absolute;left:1227px;width:60px;top:253px;height:19px;font:13px 'Liberation Sans',sans-serif;line-height:22px;text-align:right;white-space:nowrap;letter-spacing:-0.2px">100</div>
<div style="position:absolute;left:788px;width:60px;top:273px;height:19px;font:13px 'Liberation Sans',sans-serif;line-height:22px;text-align:right;white-space:nowrap;letter-spacing:-0.2px">550</div>
<div style="position:absolute;left:850px;width:79px;top:273px;height:19px;font:13px 'Liberation Sans',sans-serif;line-height:22px;text-align:right;white-space:nowrap;letter-spacing:-0.2px">750</div>
<div style="position:absolute;left:993px;width:114px;top:273px;height:19px;font:13px 'Liberation Sans',sans-serif;line-height:22px;text-align:right;white-space:nowrap;letter-spacing:-0.2px">100</div>
<div style="position:absolute;left:1227px;width:60px;top:273px;height:19px;font:13px 'Liberation Sans',sans-serif;line-height:22px;text-align:right;white-space:nowrap;letter-spacing:-0.2px">100</div>
<div style="position:absolute;left:788px;width:60px;top:293px;height:19px;font:13px 'Liberation Sans',sans-serif;line-height:22px;text-align:right;white-space:nowrap;letter-spacing:-0.2px">550</div>
<div style="position:absolute;left:850px;width:79px;top:293px;height:19px;font:13px 'Liberation Sans',sans-serif;line-height:22px;text-align:right;white-space:nowrap;letter-spacing:-0.2px">750</div>
<div style="position:absolute;left:993px;width:114px;top:293px;height:19px;font:13px 'Liberation Sans',sans-serif;line-height:22px;text-align:right;white-space:nowrap;letter-spacing:-0.2px">100</div>
<div style="position:absolute;left:1227px;width:60px;top:293px;height:19px;font:13px 'Liberation Sans',sans-serif;line-height:22px;text-align:right;white-space:nowrap;letter-spacing:-0.2px">100</div>
<div style="position:absolute;left:788px;width:60px;top:313px;height:19px;font:13px 'Liberation Sans',sans-serif;line-height:22px;text-align:right;white-space:nowrap;letter-spacing:-0.2px">550</div>
<div style="position:absolute;left:850px;width:79px;top:313px;height:19px;font:13px 'Liberation Sans',sans-serif;line-height:22px;text-align:right;white-space:nowrap;letter-spacing:-0.2px">750</div>
<div style="position:absolute;left:993px;width:114px;top:313px;height:19px;font:13px 'Liberation Sans',sans-serif;line-height:22px;text-align:right;white-space:nowrap;letter-spacing:-0.2px">100</div>
<div style="position:absolute;left:1227px;width:60px;top:313px;height:19px;font:13px 'Liberation Sans',sans-serif;line-height:22px;text-align:right;white-space:nowrap;letter-spacing:-0.2px">100</div>
<div style="position:absolute;left:788px;width:60px;top:333px;height:19px;font:13px 'Liberation Sans',sans-serif;line-height:22px;text-align:right;white-space:nowrap;letter-spacing:-0.2px">550</div>
<div style="position:absolute;left:850px;width:79px;top:333px;height:19px;font:13px 'Liberation Sans',sans-serif;line-height:22px;text-align:right;white-space:nowrap;letter-spacing:-0.2px">750</div>
<div style="position:absolute;left:993px;width:114px;top:333px;height:19px;font:13px 'Liberation Sans',sans-serif;line-height:22px;text-align:right;white-space:nowrap;letter-spacing:-0.2px">100</div>
<div style="position:absolute;left:1227px;width:60px;top:333px;height:19px;font:13px 'Liberation Sans',sans-serif;line-height:22px;text-align:right;white-space:nowrap;letter-spacing:-0.2px">100</div>
<div style="position:absolute;left:788px;width:60px;top:353px;height:19px;font:13px 'Liberation Sans',sans-serif;line-height:22px;text-align:right;white-space:nowrap;letter-spacing:-0.2px">550</div>
<div style="position:absolute;left:850px;width:79px;top:353px;height:19px;font:13px 'Liberation Sans',sans-serif;line-height:22px;text-align:right;white-space:nowrap;letter-spacing:-0.2px">750</div>
<div style="position:absolute;left:993px;width:114px;top:353px;height:19px;font:13px 'Liberation Sans',sans-serif;line-height:22px;text-align:right;white-space:nowrap;letter-spacing:-0.2px">100</div>
<div style="position:absolute;left:1227px;width:60px;top:353px;height:19px;font:13px 'Liberation Sans',sans-serif;line-height:22px;text-align:right;white-space:nowrap;letter-spacing:-0.2px">100</div>
<div style="position:absolute;left:788px;width:60px;top:373px;height:19px;font:13px 'Liberation Sans',sans-serif;line-height:22px;text-align:right;white-space:nowrap;letter-spacing:-0.2px">550</div>
<div style="position:absolute;left:850px;width:79px;top:373px;height:19px;font:13px 'Liberation Sans',sans-serif;line-height:22px;text-align:right;white-space:nowrap;letter-spacing:-0.2px">750</div>
<div style="position:absolute;left:993px;width:114px;top:373px;height:19px;font:13px 'Liberation Sans',sans-serif;line-height:22px;text-align:right;white-space:nowrap;letter-spacing:-0.2px">100</div>
<div style="position:absolute;left:1227px;width:60px;top:373px;height:19px;font:13px 'Liberation Sans',sans-serif;line-height:22px;text-align:right;white-space:nowrap;letter-spacing:-0.2px">100</div>
<div style="position:absolute;left:788px;width:60px;top:393px;height:19px;font:13px 'Liberation Sans',sans-serif;line-height:22px;text-align:right;white-space:nowrap;letter-spacing:-0.2px">550</div>
<div style="position:absolute;left:850px;width:79px;top:393px;height:19px;font:13px 'Liberation Sans',sans-serif;line-height:22px;text-align:right;white-space:nowrap;letter-spacing:-0.2px">750</div>
<div style="position:absolute;left:993px;width:114px;top:393px;height:19px;font:13px 'Liberation Sans',sans-serif;line-height:22px;text-align:right;white-space:nowrap;letter-spacing:-0.2px">100</div>
<div style="position:absolute;left:1227px;width:60px;top:393px;height:19px;font:13px 'Liberation Sans',sans-serif;line-height:22px;text-align:right;white-space:nowrap;letter-spacing:-0.2px">100</div>
<div style="position:absolute;left:788px;width:60px;top:413px;height:19px;font:13px 'Liberation Sans',sans-serif;line-height:22px;text-align:right;white-space:nowrap;letter-spacing:-0.2px">550</div>
<div style="position:absolute;left:850px;width:79px;top:413px;height:19px;font:13px 'Liberation Sans',sans-serif;line-height:22px;text-align:right;white-space:nowrap;letter-spacing:-0.2px">750</div>
<div style="position:absolute;left:993px;width:114px;top:413px;height:19px;font:13px 'Liberation Sans',sans-serif;line-height:22px;text-align:right;white-space:nowrap;letter-spacing:-0.2px">100</div>
<div style="position:absolute;left:1227px;width:60px;top:413px;height:19px;font:13px 'Liberation Sans',sans-serif;line-height:22px;text-align:right;white-space:nowrap;letter-spacing:-0.2px">100</div>
<div style="position:absolute;left:788px;width:60px;top:433px;height:19px;font:13px 'Liberation Sans',sans-serif;line-height:22px;text-align:right;white-space:nowrap;letter-spacing:-0.2px">550</div>
<div style="position:absolute;left:850px;width:79px;top:433px;height:19px;font:13px 'Liberation Sans',sans-serif;line-height:22px;text-align:right;white-space:nowrap;letter-spacing:-0.2px">750</div>
<div style="position:absolute;left:993px;width:114px;top:433px;height:19px;font:13px 'Liberation Sans',sans-serif;line-height:22px;text-align:right;white-space:nowrap;letter-spacing:-0.2px">100</div>
<div style="position:absolute;left:1227px;width:60px;top:433px;height:19px;font:13px 'Liberation Sans',sans-serif;line-height:22px;text-align:right;white-space:nowrap;letter-spacing:-0.2px">100</div>
<div style="position:absolute;left:788px;width:60px;top:453px;height:19px;font:13px 'Liberation Sans',sans-serif;line-height:22px;text-align:right;white-space:nowrap;letter-spacing:-0.2px">550</div>
<div style="position:absolute;left:850px;width:79px;top:453px;height:19px;font:13px 'Liberation Sans',sans-serif;line-height:22px;text-align:right;white-space:nowrap;letter-spacing:-0.2px">750</div>
<div style="position:absolute;left:993px;width:114px;top:453px;height:19px;font:13px 'Liberation Sans',sans-serif;line-height:22px;text-align:right;white-space:nowrap;letter-spacing:-0.2px">100</div>
<div style="position:absolute;left:1227px;width:60px;top:453px;height:19px;font:13px 'Liberation Sans',sans-serif;line-height:22px;text-align:right;white-space:nowrap;letter-spacing:-0.2px">100</div>
<div style="position:absolute;left:788px;width:60px;top:473px;height:19px;font:13px 'Liberation Sans',sans-serif;line-height:22px;text-align:right;white-space:nowrap;letter-spacing:-0.2px">550</div>
<div style="position:absolute;left:850px;width:79px;top:473px;height:19px;font:13px 'Liberation Sans',sans-serif;line-height:22px;text-align:right;white-space:nowrap;letter-spacing:-0.2px">750</div>
<div style="position:absolute;left:993px;width:114px;top:473px;height:19px;font:13px 'Liberation Sans',sans-serif;line-height:22px;text-align:right;white-space:nowrap;letter-spacing:-0.2px">100</div>
<div style="position:absolute;left:1227px;width:60px;top:473px;height:19px;font:13px 'Liberation Sans',sans-serif;line-height:22px;text-align:right;white-space:nowrap;letter-spacing:-0.2px">100</div>
<div style="position:absolute;left:788px;width:60px;top:493px;height:19px;font:13px 'Liberation Sans',sans-serif;line-height:22px;text-align:right;white-space:nowrap;letter-spacing:-0.2px">550</div>
<div style="position:absolute;left:850px;width:79px;top:493px;height:19px;font:13px 'Liberation Sans',sans-serif;line-height:22px;text-align:right;white-space:nowrap;letter-spacing:-0.2px">750</div>
<div style="position:absolute;left:993px;width:114px;top:493px;height:19px;font:13px 'Liberation Sans',sans-serif;line-height:22px;text-align:right;white-space:nowrap;letter-spacing:-0.2px">100</div>
<div style="position:absolute;left:1227px;width:60px;top:493px;height:19px;font:13px 'Liberation Sans',sans-serif;line-height:22px;text-align:right;white-space:nowrap;letter-spacing:-0.2px">100</div>
<div style="position:absolute;left:788px;width:60px;top:513px;height:19px;font:13px 'Liberation Sans',sans-serif;line-height:22px;text-align:right;white-space:nowrap;letter-spacing:-0.2px">550</div>
<div style="position:absolute;left:850px;width:79px;top:513px;height:19px;font:13px 'Liberation Sans',sans-serif;line-height:22px;text-align:right;white-space:nowrap;letter-spacing:-0.2px">750</div>
<div style="position:absolute;left:993px;width:114px;top:513px;height:19px;font:13px 'Liberation Sans',sans-serif;line-height:22px;text-align:right;white-space:nowrap;letter-spacing:-0.2px">100</div>
<div style="position:absolute;left:1227px;width:60px;top:513px;height:19px;font:13px 'Liberation Sans',sans-serif;line-height:22px;text-align:right;white-space:nowrap;letter-spacing:-0.2px">100</div>
<div style="position:absolute;left:788px;width:60px;top:533px;height:19px;font:13px 'Liberation Sans',sans-serif;line-height:22px;text-align:right;white-space:nowrap;letter-spacing:-0.2px">550</div>
<div style="position:absolute;left:850px;width:79px;top:533px;height:19px;font:13px 'Liberation Sans',sans-serif;line-height:22px;text-align:right;white-space:nowrap;letter-spacing:-0.2px">750</div>
<div style="position:absolute;left:993px;width:114px;top:533px;height:19px;font:13px 'Liberation Sans',sans-serif;line-height:22px;text-align:right;white-space:nowrap;letter-spacing:-0.2px">100</div>
<div style="position:absolute;left:1227px;width:60px;top:533px;height:19px;font:13px 'Liberation Sans',sans-serif;line-height:22px;text-align:right;white-space:nowrap;letter-spacing:-0.2px">100</div>
<div style="position:absolute;left:788px;width:60px;top:553px;height:19px;font:13px 'Liberation Sans',sans-serif;line-height:22px;text-align:right;white-space:nowrap;letter-spacing:-0.2px">550</div>
<div style="position:absolute;left:850px;width:79px;top:553px;height:19px;font:13px 'Liberation Sans',sans-serif;line-height:22px;text-align:right;white-space:nowrap;letter-spacing:-0.2px">750</div>
<div style="position:absolute;left:993px;width:114px;top:553px;height:19px;font:13px 'Liberation Sans',sans-serif;line-height:22px;text-align:right;white-space:nowrap;letter-spacing:-0.2px">100</div>
<div style="position:absolute;left:1227px;width:60px;top:553px;height:19px;font:13px 'Liberation Sans',sans-serif;line-height:22px;text-align:right;white-space:nowrap;letter-spacing:-0.2px">100</div>
<div style="position:absolute;left:788px;width:60px;top:573px;height:19px;font:13px 'Liberation Sans',sans-serif;line-height:22px;text-align:right;white-space:nowrap;letter-spacing:-0.2px">550</div>
<div style="position:absolute;left:850px;width:79px;top:573px;height:19px;font:13px 'Liberation Sans',sans-serif;line-height:22px;text-align:right;white-space:nowrap;letter-spacing:-0.2px">750</div>
<div style="position:absolute;left:993px;width:114px;top:573px;height:19px;font:13px 'Liberation Sans',sans-serif;line-height:22px;text-align:right;white-space:nowrap;letter-spacing:-0.2px">100</div>
<div style="position:absolute;left:1227px;width:60px;top:573px;height:19px;font:13px 'Liberation Sans',sans-serif;line-height:22px;text-align:right;white-space:nowrap;letter-spacing:-0.2px">100</div>
<div style="position:absolute;left:788px;width:60px;top:593px;height:19px;font:13px 'Liberation Sans',sans-serif;line-height:22px;text-align:right;white-space:nowrap;letter-spacing:-0.2px">550</div>
<div style="position:absolute;left:850px;width:79px;top:593px;height:19px;font:13px 'Liberation Sans',sans-serif;line-height:22px;text-align:right;white-space:nowrap;letter-spacing:-0.2px">750</div>
<div style="position:absolute;left:993px;width:114px;top:593px;height:19px;font:13px 'Liberation Sans',sans-serif;line-height:22px;text-align:right;white-space:nowrap;letter-spacing:-0.2px">100</div>
<div style="position:absolute;left:1227px;width:60px;top:593px;height:19px;font:13px 'Liberation Sans',sans-serif;line-height:22px;text-align:right;white-space:nowrap;letter-spacing:-0.2px">100</div>
<div style="position:absolute;left:788px;width:60px;top:613px;height:19px;font:13px 'Liberation Sans',sans-serif;line-height:22px;text-align:right;white-space:nowrap;letter-spacing:-0.2px">550</div>
<div style="position:absolute;left:850px;width:79px;top:613px;height:19px;font:13px 'Liberation Sans',sans-serif;line-height:22px;text-align:right;white-space:nowrap;letter-spacing:-0.2px">750</div>
<div style="position:absolute;left:993px;width:114px;top:613px;height:19px;font:13px 'Liberation Sans',sans-serif;line-height:22px;text-align:right;white-space:nowrap;letter-spacing:-0.2px">100</div>
<div style="position:absolute;left:1227px;width:60px;top:613px;height:19px;font:13px 'Liberation Sans',sans-serif;line-height:22px;text-align:right;white-space:nowrap;letter-spacing:-0.2px">100</div>
<div style="position:absolute;left:788px;width:60px;top:633px;height:19px;font:13px 'Liberation Sans',sans-serif;line-height:22px;text-align:right;white-space:nowrap;letter-spacing:-0.2px">550</div>
<div style="position:absolute;left:850px;width:79px;top:633px;height:19px;font:13px 'Liberation Sans',sans-serif;line-height:22px;text-align:right;white-space:nowrap;letter-spacing:-0.2px">750</div>
<div style="position:absolute;left:993px;width:114px;top:633px;height:19px;font:13px 'Liberation Sans',sans-serif;line-height:22px;text-align:right;white-space:nowrap;letter-spacing:-0.2px">100</div>
<div style="position:absolute;left:1227px;width:60px;top:633px;height:19px;font:13px 'Liberation Sans',sans-serif;line-height:22px;text-align:right;white-space:nowrap;letter-spacing:-0.2px">100</div>
<div style="position:absolute;left:788px;width:60px;top:653px;height:19px;font:13px 'Liberation Sans',sans-serif;line-height:22px;text-align:right;white-space:nowrap;letter-spacing:-0.2px">550</div>
<div style="position:absolute;left:850px;width:79px;top:653px;height:19px;font:13px 'Liberation Sans',sans-serif;line-height:22px;text-align:right;white-space:nowrap;letter-spacing:-0.2px">750</div>
<div style="position:absolute;left:993px;width:114px;top:653px;height:19px;font:13px 'Liberation Sans',sans-serif;line-height:22px;text-align:right;white-space:nowrap;letter-spacing:-0.2px">100</div>
<div style="position:absolute;left:1227px;width:60px;top:653px;height:19px;font:13px 'Liberation Sans',sans-serif;line-height:22px;text-align:right;white-space:nowrap;letter-spacing:-0.2px">100</div>
<div style="position:absolute;left:788px;width:60px;top:673px;height:19px;font:13px 'Liberation Sans',sans-serif;line-height:22px;text-align:right;white-space:nowrap;letter-spacing:-0.2px">550</div>
<div style="position:absolute;left:850px;width:79px;top:673px;height:19px;font:13px 'Liberation Sans',sans-serif;line-height:22px;text-align:right;white-space:nowrap;letter-spacing:-0.2px">750</div>
<div style="position:absolute;left:993px;width:114px;top:673px;height:19px;font:13px 'Liberation Sans',sans-serif;line-height:22px;text-align:right;white-space:nowrap;letter-spacing:-0.2px">100</div>
<div style="position:absolute;left:1227px;width:60px;top:673px;height:19px;font:13px 'Liberation Sans',sans-serif;line-height:22px;text-align:right;white-space:nowrap;letter-spacing:-0.2px">100</div>
<div style="position:absolute;left:788px;width:60px;top:693px;height:19px;font:13px 'Liberation Sans',sans-serif;line-height:22px;text-align:right;white-space:nowrap;letter-spacing:-0.2px">550</div>
<div style="position:absolute;left:850px;width:79px;top:693px;height:19px;font:13px 'Liberation Sans',sans-serif;line-height:22px;text-align:right;white-space:nowrap;letter-spacing:-0.2px">750</div>
<div style="position:absolute;left:993px;width:114px;top:693px;height:19px;font:13px 'Liberation Sans',sans-serif;line-height:22px;text-align:right;white-space:nowrap;letter-spacing:-0.2px">100</div>
<div style="position:absolute;left:1227px;width:60px;top:693px;height:19px;font:13px 'Liberation Sans',sans-serif;line-height:22px;text-align:right;white-space:nowrap;letter-spacing:-0.2px">100</div>
<div style="position:absolute;left:788px;width:60px;top:713px;height:19px;font:13px 'Liberation Sans',sans-serif;line-height:22px;text-align:right;white-space:nowrap;letter-spacing:-0.2px">550</div>
<div style="position:absolute;left:850px;width:79px;top:713px;height:19px;font:13px 'Liberation Sans',sans-serif;line-height:22px;text-align:right;white-space:nowrap;letter-spacing:-0.2px">750</div>
<div style="position:absolute;left:993px;width:114px;top:713px;height:19px;font:13px 'Liberation Sans',sans-serif;line-height:22px;text-align:right;white-space:nowrap;letter-spacing:-0.2px">100</div>
<div style="position:absolute;left:1227px;width:60px;top:713px;height:19px;font:13px 'Liberation Sans',sans-serif;line-height:22px;text-align:right;white-space:nowrap;letter-spacing:-0.2px">100</div>
<div style="position:absolute;left:788px;width:60px;top:733px;height:19px;font:13px 'Liberation Sans',sans-serif;line-height:22px;text-align:right;white-space:nowrap;letter-spacing:-0.2px">550</div>
<div style="position:absolute;left:850px;width:79px;top:733px;height:19px;font:13px 'Liberation Sans',sans-serif;line-height:22px;text-align:right;white-space:nowrap;letter-spacing:-0.2px">750</div>
<div style="position:absolute;left:993px;width:114px;top:733px;height:19px;font:13px 'Liberation Sans',sans-serif;line-height:22px;text-align:right;white-space:nowrap;letter-spacing:-0.2px">100</div>
<div style="position:absolute;left:1227px;width:60px;top:733px;height:19px;font:13px 'Liberation Sans',sans-serif;line-height:22px;text-align:right;white-space:nowrap;letter-spacing:-0.2px">100</div>
<div style="position:absolute;left:788px;width:60px;top:753px;height:19px;font:13px 'Liberation Sans',sans-serif;line-height:22px;text-align:right;white-space:nowrap;letter-spacing:-0.2px">550</div>
<div style="position:absolute;left:850px;width:79px;top:753px;height:19px;font:13px 'Liberation Sans',sans-serif;line-height:22px;text-align:right;white-space:nowrap;letter-spacing:-0.2px">750</div>
<div style="position:absolute;left:993px;width:114px;top:753px;height:19px;font:13px 'Liberation Sans',sans-serif;line-height:22px;text-align:right;white-space:nowrap;letter-spacing:-0.2px">100</div>
<div style="position:absolute;left:1227px;width:60px;top:753px;height:19px;font:13px 'Liberation Sans',sans-serif;line-height:22px;text-align:right;white-space:nowrap;letter-spacing:-0.2px">100</div>
<div style="position:absolute;left:172px;top:173px;width:0;height:0;border-left:6px solid transparent;border-top:6px solid #E00000"></div>
<div style="position:absolute;left:234px;top:173px;width:0;height:0;border-left:6px solid transparent;border-top:6px solid #E00000"></div>
<div style="position:absolute;left:296px;top:173px;width:0;height:0;border-left:6px solid transparent;border-top:6px solid #E00000"></div>
<div style="position:absolute;left:772px;top:173px;width:0;height:0;border-left:6px solid transparent;border-top:6px solid #E00000"></div>
<div style="position:absolute;left:925px;top:153px;width:0;height:0;border-left:6px solid transparent;border-top:6px solid #E00000"></div>
<div style="position:absolute;left:779px;top:193px;width:0;height:0;border-right:5px solid transparent;border-top:5px solid #008000"></div>
<div style="position:absolute;left:779px;top:213px;width:0;height:0;border-right:5px solid transparent;border-top:5px solid #008000"></div>
<div style="position:absolute;left:779px;top:233px;width:0;height:0;border-right:5px solid transparent;border-top:5px solid #008000"></div>
<div style="position:absolute;left:779px;top:253px;width:0;height:0;border-right:5px solid transparent;border-top:5px solid #008000"></div>
<div style="position:absolute;left:779px;top:273px;width:0;height:0;border-right:5px solid transparent;border-top:5px solid #008000"></div>
<div style="position:absolute;left:779px;top:293px;width:0;height:0;border-right:5px solid transparent;border-top:5px solid #008000"></div>
<div style="position:absolute;left:779px;top:313px;width:0;height:0;border-right:5px solid transparent;border-top:5px solid #008000"></div>
<div style="position:absolute;left:779px;top:333px;width:0;height:0;border-right:5px solid transparent;border-top:5px solid #008000"></div>
<div style="position:absolute;left:779px;top:353px;width:0;height:0;border-right:5px solid transparent;border-top:5px solid #008000"></div>
<div style="position:absolute;left:779px;top:373px;width:0;height:0;border-right:5px solid transparent;border-top:5px solid #008000"></div>
<div style="position:absolute;left:779px;top:393px;width:0;height:0;border-right:5px solid transparent;border-top:5px solid #008000"></div>
<div style="position:absolute;left:779px;top:413px;width:0;height:0;border-right:5px solid transparent;border-top:5px solid #008000"></div>
<div style="position:absolute;left:779px;top:433px;width:0;height:0;border-right:5px solid transparent;border-top:5px solid #008000"></div>
<div style="position:absolute;left:779px;top:453px;width:0;height:0;border-right:5px solid transparent;border-top:5px solid #008000"></div>
<div style="position:absolute;left:779px;top:473px;width:0;height:0;border-right:5px solid transparent;border-top:5px solid #008000"></div>
<div style="position:absolute;left:779px;top:493px;width:0;height:0;border-right:5px solid transparent;border-top:5px solid #008000"></div>
<div style="position:absolute;left:779px;top:513px;width:0;height:0;border-right:5px solid transparent;border-top:5px solid #008000"></div>
<div style="position:absolute;left:779px;top:533px;width:0;height:0;border-right:5px solid transparent;border-top:5px solid #008000"></div>
<div style="position:absolute;left:779px;top:553px;width:0;height:0;border-right:5px solid transparent;border-top:5px solid #008000"></div>
<div style="position:absolute;left:779px;top:573px;width:0;height:0;border-right:5px solid transparent;border-top:5px solid #008000"></div>
<div style="position:absolute;left:779px;top:593px;width:0;height:0;border-right:5px solid transparent;border-top:5px solid #008000"></div>
<div style="position:absolute;left:779px;top:613px;width:0;height:0;border-right:5px solid transparent;border-top:5px solid #008000"></div>
<div style="position:absolute;left:779px;top:633px;width:0;height:0;border-right:5px solid transparent;border-top:5px solid #008000"></div>
<div style="position:absolute;left:779px;top:653px;width:0;height:0;border-right:5px solid transparent;border-top:5px solid #008000"></div>
<div style="position:absolute;left:779px;top:673px;width:0;height:0;border-right:5px solid transparent;border-top:5px solid #008000"></div>
<div style="position:absolute;left:779px;top:693px;width:0;height:0;border-right:5px solid transparent;border-top:5px solid #008000"></div>
<div style="position:absolute;left:779px;top:713px;width:0;height:0;border-right:5px solid transparent;border-top:5px solid #008000"></div>
<div style="position:absolute;left:779px;top:733px;width:0;height:0;border-right:5px solid transparent;border-top:5px solid #008000"></div>
<div style="position:absolute;left:779px;top:753px;width:0;height:0;border-right:5px solid transparent;border-top:5px solid #008000"></div>
<div style="position:absolute;left:301px;top:191px;width:65px;height:23px;border:1px solid #000;box-sizing:border-box"></div>
<div style="position:absolute;left:302px;top:192px;width:63px;height:21px;border:1px solid #fff;box-sizing:border-box"></div>
<div style="position:absolute;left:303px;top:193px;width:61px;height:19px;border:1px solid #000;box-sizing:border-box"></div>
<div style="position:absolute;left:0;top:113px;width:1420px;height:19px;background:#DFE3E8"></div>
<div style="position:absolute;left:0;top:132px;width:1420px;height:1px;background:#A9AEB6"></div>
<div style="position:absolute;left:0;top:133px;width:25px;height:642px;background:#DFE3E8"></div>
<div style="position:absolute;left:25px;top:113px;width:1px;height:662px;background:#A9AEB6"></div>
<div style="position:absolute;left:116px;top:113px;width:1px;height:19px;background:#B3B8C0"></div>
<div style="position:absolute;left:25px;top:113px;width:91px;height:19px;text-align:center;font:14px 'Liberation Sans',sans-serif;line-height:20px;color:#202020;overflow:hidden">A</div>
<div style="position:absolute;left:178px;top:113px;width:1px;height:19px;background:#B3B8C0"></div>
<div style="position:absolute;left:116px;top:113px;width:62px;height:19px;text-align:center;font:14px 'Liberation Sans',sans-serif;line-height:20px;color:#202020;overflow:hidden">B</div>
<div style="position:absolute;left:240px;top:113px;width:1px;height:19px;background:#B3B8C0"></div>
<div style="position:absolute;left:178px;top:113px;width:62px;height:19px;text-align:center;font:14px 'Liberation Sans',sans-serif;line-height:20px;color:#202020;overflow:hidden">C</div>
<div style="position:absolute;left:302px;top:113px;width:1px;height:19px;background:#B3B8C0"></div>
<div style="position:absolute;left:240px;top:113px;width:62px;height:19px;text-align:center;font:14px 'Liberation Sans',sans-serif;line-height:20px;color:#202020;overflow:hidden">D</div>
<div style="position:absolute;left:302px;top:113px;width:63px;height:19px;background:linear-gradient(#F8D45C,#FBE07C);border-left:1px solid #C89540;border-right:1px solid #C89540;box-sizing:border-box"></div>
<div style="position:absolute;left:302px;top:132px;width:63px;height:1px;background:#E0862E"></div>
<div style="position:absolute;left:302px;top:113px;width:62px;height:19px;text-align:center;font:14px 'Liberation Sans',sans-serif;line-height:20px;color:#202020;overflow:hidden">E</div>
<div style="position:absolute;left:426px;top:113px;width:1px;height:19px;background:#B3B8C0"></div>
<div style="position:absolute;left:364px;top:113px;width:62px;height:19px;text-align:center;font:14px 'Liberation Sans',sans-serif;line-height:20px;color:#202020;overflow:hidden">F</div>
<div style="position:absolute;left:508px;top:113px;width:1px;height:19px;background:#B3B8C0"></div>
<div style="position:absolute;left:426px;top:113px;width:82px;height:19px;text-align:center;font:14px 'Liberation Sans',sans-serif;line-height:20px;color:#202020;overflow:hidden">G</div>
<div style="position:absolute;left:587px;top:113px;width:1px;height:19px;background:#B3B8C0"></div>
<div style="position:absolute;left:508px;top:113px;width:79px;height:19px;text-align:center;font:14px 'Liberation Sans',sans-serif;line-height:20px;color:#202020;overflow:hidden">H</div>
<div style="position:absolute;left:649px;top:113px;width:1px;height:19px;background:#B3B8C0"></div>
<div style="position:absolute;left:587px;top:113px;width:62px;height:19px;text-align:center;font:14px 'Liberation Sans',sans-serif;line-height:20px;color:#202020;overflow:hidden">I</div>
<div style="position:absolute;left:711px;top:113px;width:1px;height:19px;background:#B3B8C0"></div>
<div style="position:absolute;left:649px;top:113px;width:62px;height:19px;text-align:center;font:14px 'Liberation Sans',sans-serif;line-height:20px;color:#202020;overflow:hidden">J</div>
<div style="position:absolute;left:778px;top:113px;width:1px;height:19px;background:#B3B8C0"></div>
<div style="position:absolute;left:711px;top:113px;width:67px;height:19px;text-align:center;font:14px 'Liberation Sans',sans-serif;line-height:20px;color:#202020;overflow:hidden">K</div>
<div style="position:absolute;left:788px;top:113px;width:1px;height:19px;background:#B3B8C0"></div>
<div style="position:absolute;left:778px;top:113px;width:10px;height:19px;text-align:center;font:14px 'Liberation Sans',sans-serif;line-height:20px;color:#202020;overflow:hidden">L</div>
<div style="position:absolute;left:850px;top:113px;width:1px;height:19px;background:#B3B8C0"></div>
<div style="position:absolute;left:788px;top:113px;width:62px;height:19px;text-align:center;font:14px 'Liberation Sans',sans-serif;line-height:20px;color:#202020;overflow:hidden">M</div>
<div style="position:absolute;left:931px;top:113px;width:1px;height:19px;background:#B3B8C0"></div>
<div style="position:absolute;left:850px;top:113px;width:81px;height:19px;text-align:center;font:14px 'Liberation Sans',sans-serif;line-height:20px;color:#202020;overflow:hidden">N</div>
<div style="position:absolute;left:993px;top:113px;width:1px;height:19px;background:#B3B8C0"></div>
<div style="position:absolute;left:931px;top:113px;width:62px;height:19px;text-align:center;font:14px 'Liberation Sans',sans-serif;line-height:20px;color:#202020;overflow:hidden">O</div>
<div style="position:absolute;left:1109px;top:113px;width:1px;height:19px;background:#B3B8C0"></div>
<div style="position:absolute;left:993px;top:113px;width:116px;height:19px;text-align:center;font:14px 'Liberation Sans',sans-serif;line-height:20px;color:#202020;overflow:hidden">P</div>
<div style="position:absolute;left:1227px;top:113px;width:1px;height:19px;background:#B3B8C0"></div>
<div style="position:absolute;left:1109px;top:113px;width:118px;height:19px;text-align:center;font:14px 'Liberation Sans',sans-serif;line-height:20px;color:#202020;overflow:hidden">Q</div>
<div style="position:absolute;left:1289px;top:113px;width:1px;height:19px;background:#B3B8C0"></div>
<div style="position:absolute;left:1227px;top:113px;width:62px;height:19px;text-align:center;font:14px 'Liberation Sans',sans-serif;line-height:20px;color:#202020;overflow:hidden">R</div>
<div style="position:absolute;left:1351px;top:113px;width:1px;height:19px;background:#B3B8C0"></div>
<div style="position:absolute;left:1289px;top:113px;width:62px;height:19px;text-align:center;font:14px 'Liberation Sans',sans-serif;line-height:20px;color:#202020;overflow:hidden">S</div>
<div style="position:absolute;left:1413px;top:113px;width:1px;height:19px;background:#B3B8C0"></div>
<div style="position:absolute;left:1351px;top:113px;width:62px;height:19px;text-align:center;font:14px 'Liberation Sans',sans-serif;line-height:20px;color:#202020;overflow:hidden">T</div>
<div style="position:absolute;left:0;top:152px;width:25px;height:1px;background:#A9AEB6"></div>
<div style="position:absolute;left:0;top:133px;width:25px;height:19px;text-align:center;font:14px 'Liberation Sans',sans-serif;line-height:20px;color:#202020">1</div>
<div style="position:absolute;left:0;top:172px;width:25px;height:1px;background:#A9AEB6"></div>
<div style="position:absolute;left:0;top:153px;width:25px;height:19px;text-align:center;font:14px 'Liberation Sans',sans-serif;line-height:20px;color:#202020">2</div>
<div style="position:absolute;left:0;top:192px;width:25px;height:1px;background:#A9AEB6"></div>
<div style="position:absolute;left:0;top:173px;width:25px;height:19px;text-align:center;font:14px 'Liberation Sans',sans-serif;line-height:20px;color:#202020">3</div>
<div style="position:absolute;left:0;top:192px;width:26px;height:21px;background:#F9D46A;border-top:1px solid #D09030;border-bottom:1px solid #D09030;border-right:1px solid #E2A040;box-sizing:border-box"></div>
<div style="position:absolute;left:0;top:193px;width:25px;height:19px;text-align:center;font:14px 'Liberation Sans',sans-serif;line-height:20px;color:#202020">4</div>
<div style="position:absolute;left:0;top:232px;width:25px;height:1px;background:#A9AEB6"></div>
<div style="position:absolute;left:0;top:213px;width:25px;height:19px;text-align:center;font:14px 'Liberation Sans',sans-serif;line-height:20px;color:#202020">5</div>
<div style="position:absolute;left:0;top:252px;width:25px;height:1px;background:#A9AEB6"></div>
<div style="position:absolute;left:0;top:233px;width:25px;height:19px;text-align:center;font:14px 'Liberation Sans',sans-serif;line-height:20px;color:#202020">6</div>
<div style="position:absolute;left:0;top:272px;width:25px;height:1px;background:#A9AEB6"></div>
<div style="position:absolute;left:0;top:253px;width:25px;height:19px;text-align:center;font:14px 'Liberation Sans',sans-serif;line-height:20px;color:#202020">7</div>
<div style="position:absolute;left:0;top:292px;width:25px;height:1px;background:#A9AEB6"></div>
<div style="position:absolute;left:0;top:273px;width:25px;height:19px;text-align:center;font:14px 'Liberation Sans',sans-serif;line-height:20px;color:#202020">8</div>
<div style="position:absolute;left:0;top:312px;width:25px;height:1px;background:#A9AEB6"></div>
<div style="position:absolute;left:0;top:293px;width:25px;height:19px;text-align:center;font:14px 'Liberation Sans',sans-serif;line-height:20px;color:#202020">9</div>
<div style="position:absolute;left:0;top:332px;width:25px;height:1px;background:#A9AEB6"></div>
<div style="position:absolute;left:0;top:313px;width:25px;height:19px;text-align:center;font:14px 'Liberation Sans',sans-serif;line-height:20px;color:#202020">10</div>
<div style="position:absolute;left:0;top:352px;width:25px;height:1px;background:#A9AEB6"></div>
<div style="position:absolute;left:0;top:333px;width:25px;height:19px;text-align:center;font:14px 'Liberation Sans',sans-serif;line-height:20px;color:#202020">11</div>
<div style="position:absolute;left:0;top:372px;width:25px;height:1px;background:#A9AEB6"></div>
<div style="position:absolute;left:0;top:353px;width:25px;height:19px;text-align:center;font:14px 'Liberation Sans',sans-serif;line-height:20px;color:#202020">12</div>
<div style="position:absolute;left:0;top:392px;width:25px;height:1px;background:#A9AEB6"></div>
<div style="position:absolute;left:0;top:373px;width:25px;height:19px;text-align:center;font:14px 'Liberation Sans',sans-serif;line-height:20px;color:#202020">13</div>
<div style="position:absolute;left:0;top:412px;width:25px;height:1px;background:#A9AEB6"></div>
<div style="position:absolute;left:0;top:393px;width:25px;height:19px;text-align:center;font:14px 'Liberation Sans',sans-serif;line-height:20px;color:#202020">14</div>
<div style="position:absolute;left:0;top:432px;width:25px;height:1px;background:#A9AEB6"></div>
<div style="position:absolute;left:0;top:413px;width:25px;height:19px;text-align:center;font:14px 'Liberation Sans',sans-serif;line-height:20px;color:#202020">15</div>
<div style="position:absolute;left:0;top:452px;width:25px;height:1px;background:#A9AEB6"></div>
<div style="position:absolute;left:0;top:433px;width:25px;height:19px;text-align:center;font:14px 'Liberation Sans',sans-serif;line-height:20px;color:#202020">16</div>
<div style="position:absolute;left:0;top:472px;width:25px;height:1px;background:#A9AEB6"></div>
<div style="position:absolute;left:0;top:453px;width:25px;height:19px;text-align:center;font:14px 'Liberation Sans',sans-serif;line-height:20px;color:#202020">17</div>
<div style="position:absolute;left:0;top:492px;width:25px;height:1px;background:#A9AEB6"></div>
<div style="position:absolute;left:0;top:473px;width:25px;height:19px;text-align:center;font:14px 'Liberation Sans',sans-serif;line-height:20px;color:#202020">18</div>
<div style="position:absolute;left:0;top:512px;width:25px;height:1px;background:#A9AEB6"></div>
<div style="position:absolute;left:0;top:493px;width:25px;height:19px;text-align:center;font:14px 'Liberation Sans',sans-serif;line-height:20px;color:#202020">19</div>
<div style="position:absolute;left:0;top:532px;width:25px;height:1px;background:#A9AEB6"></div>
<div style="position:absolute;left:0;top:513px;width:25px;height:19px;text-align:center;font:14px 'Liberation Sans',sans-serif;line-height:20px;color:#202020">20</div>
<div style="position:absolute;left:0;top:552px;width:25px;height:1px;background:#A9AEB6"></div>
<div style="position:absolute;left:0;top:533px;width:25px;height:19px;text-align:center;font:14px 'Liberation Sans',sans-serif;line-height:20px;color:#202020">21</div>
<div style="position:absolute;left:0;top:572px;width:25px;height:1px;background:#A9AEB6"></div>
<div style="position:absolute;left:0;top:553px;width:25px;height:19px;text-align:center;font:14px 'Liberation Sans',sans-serif;line-height:20px;color:#202020">22</div>
<div style="position:absolute;left:0;top:592px;width:25px;height:1px;background:#A9AEB6"></div>
<div style="position:absolute;left:0;top:573px;width:25px;height:19px;text-align:center;font:14px 'Liberation Sans',sans-serif;line-height:20px;color:#202020">23</div>
<div style="position:absolute;left:0;top:612px;width:25px;height:1px;background:#A9AEB6"></div>
<div style="position:absolute;left:0;top:593px;width:25px;height:19px;text-align:center;font:14px 'Liberation Sans',sans-serif;line-height:20px;color:#202020">24</div>
<div style="position:absolute;left:0;top:632px;width:25px;height:1px;background:#A9AEB6"></div>
<div style="position:absolute;left:0;top:613px;width:25px;height:19px;text-align:center;font:14px 'Liberation Sans',sans-serif;line-height:20px;color:#202020">25</div>
<div style="position:absolute;left:0;top:652px;width:25px;height:1px;background:#A9AEB6"></div>
<div style="position:absolute;left:0;top:633px;width:25px;height:19px;text-align:center;font:14px 'Liberation Sans',sans-serif;line-height:20px;color:#202020">26</div>
<div style="position:absolute;left:0;top:672px;width:25px;height:1px;background:#A9AEB6"></div>
<div style="position:absolute;left:0;top:653px;width:25px;height:19px;text-align:center;font:14px 'Liberation Sans',sans-serif;line-height:20px;color:#202020">27</div>
<div style="position:absolute;left:0;top:692px;width:25px;height:1px;background:#A9AEB6"></div>
<div style="position:absolute;left:0;top:673px;width:25px;height:19px;text-align:center;font:14px 'Liberation Sans',sans-serif;line-height:20px;color:#202020">28</div>
<div style="position:absolute;left:0;top:712px;width:25px;height:1px;background:#A9AEB6"></div>
<div style="position:absolute;left:0;top:693px;width:25px;height:19px;text-align:center;font:14px 'Liberation Sans',sans-serif;line-height:20px;color:#202020">29</div>
<div style="position:absolute;left:0;top:732px;width:25px;height:1px;background:#A9AEB6"></div>
<div style="position:absolute;left:0;top:713px;width:25px;height:19px;text-align:center;font:14px 'Liberation Sans',sans-serif;line-height:20px;color:#202020">30</div>
<div style="position:absolute;left:0;top:752px;width:25px;height:1px;background:#A9AEB6"></div>
<div style="position:absolute;left:0;top:733px;width:25px;height:19px;text-align:center;font:14px 'Liberation Sans',sans-serif;line-height:20px;color:#202020">31</div>
<div style="position:absolute;left:0;top:772px;width:25px;height:1px;background:#A9AEB6"></div>
<div style="position:absolute;left:0;top:753px;width:25px;height:19px;text-align:center;font:14px 'Liberation Sans',sans-serif;line-height:20px;color:#202020">32</div>
<div style="position:absolute;left:10px;top:118px;width:0;height:0;border-left:11px solid transparent;border-bottom:11px solid #C3C8CE"></div>
<div style="position:absolute;left:1413px;top:113px;width:27px;height:662px;background:#F0F2F5"></div>
<div style="position:absolute;left:1413px;top:113px;width:1px;height:19px;background:#B3B8C0"></div>
<div style="position:absolute;left:1414px;top:113px;width:22px;height:19px;background:#DFE3E8"></div>
<div style="position:absolute;left:1414px;top:133px;width:6px;height:642px;background:#fff"></div>
<div style="position:absolute;left:1414px;top:152px;width:6px;height:1px;background:#505050"></div>
<div style="position:absolute;left:1414px;top:172px;width:6px;height:1px;background:#DADCDD"></div>
<div style="position:absolute;left:1414px;top:192px;width:6px;height:1px;background:#DADCDD"></div>
<div style="position:absolute;left:1414px;top:212px;width:6px;height:1px;background:#DADCDD"></div>
<div style="position:absolute;left:1414px;top:232px;width:6px;height:1px;background:#DADCDD"></div>
<div style="position:absolute;left:1414px;top:252px;width:6px;height:1px;background:#DADCDD"></div>
<div style="position:absolute;left:1414px;top:272px;width:6px;height:1px;background:#DADCDD"></div>
<div style="position:absolute;left:1414px;top:292px;width:6px;height:1px;background:#DADCDD"></div>
<div style="position:absolute;left:1414px;top:312px;width:6px;height:1px;background:#DADCDD"></div>
<div style="position:absolute;left:1414px;top:332px;width:6px;height:1px;background:#DADCDD"></div>
<div style="position:absolute;left:1414px;top:352px;width:6px;height:1px;background:#DADCDD"></div>
<div style="position:absolute;left:1414px;top:372px;width:6px;height:1px;background:#DADCDD"></div>
<div style="position:absolute;left:1414px;top:392px;width:6px;height:1px;background:#DADCDD"></div>
<div style="position:absolute;left:1414px;top:412px;width:6px;height:1px;background:#DADCDD"></div>
<div style="position:absolute;left:1414px;top:432px;width:6px;height:1px;background:#DADCDD"></div>
<div style="position:absolute;left:1414px;top:452px;width:6px;height:1px;background:#DADCDD"></div>
<div style="position:absolute;left:1414px;top:472px;width:6px;height:1px;background:#DADCDD"></div>
<div style="position:absolute;left:1414px;top:492px;width:6px;height:1px;background:#DADCDD"></div>
<div style="position:absolute;left:1414px;top:512px;width:6px;height:1px;background:#DADCDD"></div>
<div style="position:absolute;left:1414px;top:532px;width:6px;height:1px;background:#DADCDD"></div>
<div style="position:absolute;left:1414px;top:552px;width:6px;height:1px;background:#DADCDD"></div>
<div style="position:absolute;left:1414px;top:572px;width:6px;height:1px;background:#DADCDD"></div>
<div style="position:absolute;left:1414px;top:592px;width:6px;height:1px;background:#DADCDD"></div>
<div style="position:absolute;left:1414px;top:612px;width:6px;height:1px;background:#DADCDD"></div>
<div style="position:absolute;left:1414px;top:632px;width:6px;height:1px;background:#DADCDD"></div>
<div style="position:absolute;left:1414px;top:652px;width:6px;height:1px;background:#DADCDD"></div>
<div style="position:absolute;left:1414px;top:672px;width:6px;height:1px;background:#DADCDD"></div>
<div style="position:absolute;left:1414px;top:692px;width:6px;height:1px;background:#DADCDD"></div>
<div style="position:absolute;left:1414px;top:712px;width:6px;height:1px;background:#DADCDD"></div>
<div style="position:absolute;left:1414px;top:732px;width:6px;height:1px;background:#DADCDD"></div>
<div style="position:absolute;left:1414px;top:752px;width:6px;height:1px;background:#DADCDD"></div>
<div style="position:absolute;left:1414px;top:772px;width:6px;height:1px;background:#DADCDD"></div>
<div style="position:absolute;left:1420px;top:132px;width:16px;height:643px;background:#DDE1E7"></div>
<div style="position:absolute;left:1436px;top:113px;width:1px;height:662px;background:#8E949C"></div>
<div style="position:absolute;left:1422px;top:119px;width:0;height:0;border-left:5px solid transparent;border-right:5px solid transparent;border-bottom:5px solid #3A3A3A"></div>
<div style="position:absolute;left:1422px;top:761px;width:0;height:0;border-left:5px solid transparent;border-right:5px solid transparent;border-top:5px solid #3A3A3A"></div>
<div style="position:absolute;left:1420px;top:130px;width:15px;height:217px;background:linear-gradient(90deg,#F4F5F8,#E8EBEF 60%,#DADDE3);border:1px solid #7E848C;box-sizing:border-box;border-radius:1px"></div>
<div style="position:absolute;left:1424px;top:229px;width:8px;height:1px;background:#6A7078;box-shadow:0 2px 0 #6A7078,0 4px 0 #6A7078"></div>
<div style="position:absolute;left:0;top:772px;width:1440px;height:3px;background:#DADDE2"></div>
<div style="position:absolute;left:62px;top:772px;width:70px;height:3px;background:#FAFBFC"></div>
<div style="position:absolute;left:132px;top:772px;width:1288px;height:1px;background:#A4AAB2"></div>
<div style="position:absolute;left:877px;top:773px;width:543px;height:2px;background:#F2F4F6"></div>
<div style="position:absolute;left:852px;top:772px;width:8px;height:3px;background:#fff;border:1px solid #8A9098;border-bottom:none;box-sizing:border-box"></div>
<!-- MINI TOOLBAR -->
<div style="position:absolute;left:341px;top:136px;width:247px;height:51px;background:linear-gradient(#FFFFFF,#F7F8FA);border:1px solid #C6CAD0;box-sizing:border-box;box-shadow:2px 2px 2px rgba(0,0,0,0.12)"></div>
<div class="cbox" style="left:343px;top:138px;width:59px;height:21px"></div>
<div class="cbox" style="left:402px;top:138px;width:40px;height:21px"></div>
<div class="rt" style="left:346px;top:142px;color:#1a1a40">Calibri</div>
<div class="rt" style="left:405px;top:142px;color:#1a1a40">11</div>
<div class="arr" style="left:393px;top:147px"></div>
<div class="arr" style="left:433px;top:147px"></div>
<div style="position:absolute;left:446px;top:138px;font:bold 17px 'Liberation Serif',serif;color:#222">A</div>
<svg style="position:absolute;left:458px;top:141px" width="6" height="4"><path d="M0 4L3 0L6 4Z" fill="#3A66B8"/></svg>
<div style="position:absolute;left:470px;top:143px;font:bold 12px 'Liberation Serif',serif;color:#222">A</div>
<svg style="position:absolute;left:478px;top:141px" width="6" height="4"><path d="M0 0L3 4L6 0Z" fill="#3A66B8"/></svg>
<div style="position:absolute;left:492px;top:139px;font:bold 15px 'Liberation Serif',serif;color:#111">$</div>
<div class="arr" style="left:512px;top:147px"></div>
<div style="position:absolute;left:525px;top:140px;font:13px 'Liberation Sans',sans-serif;color:#111">%</div>
<div style="position:absolute;left:551px;top:136px;font:bold 15px 'Liberation Serif',serif;color:#111">,</div>
<svg style="position:absolute;left:568px;top:141px" width="17" height="16">
 <rect x="0.5" y="0.5" width="16" height="15" fill="#E4ECF8" stroke="#3E5F9A"/>
 <path d="M0.5 3.5H16.5M0.5 12.5H16.5M8.5 0.5V3.5M8.5 12.5V15.5" stroke="#3E5F9A"/>
 <rect x="1" y="4" width="15" height="8" fill="#fff"/>
 <text x="5.2" y="10.8" font-family="Liberation Serif" font-weight="bold" font-size="10" fill="#111">a</text>
 <path d="M1.5 8H4.5M3 6.5L4.5 8L3 9.5M15.5 8H12.5M14 6.5L12.5 8L14 9.5" stroke="#222" stroke-width="0.9" fill="none"/>
</svg>
<div style="position:absolute;left:347px;top:166px;font:bold 13px 'Liberation Serif',serif;color:#111">B</div>
<div style="position:absolute;left:371px;top:166px;font:italic bold 13px 'Liberation Serif',serif;color:#111">I</div>
<svg style="position:absolute;left:390px;top:167px" width="15" height="12"><path d="M0 0.5H14M2 2.5H12M0 4.5H14M2 6.5H12M0 8.5H14M2 10.5H12" stroke="#111"/></svg>
<svg style="position:absolute;left:412px;top:165px" width="17" height="17">
 <path d="M1.5 8L6.5 3L11.5 8L6.5 13Z" fill="#FDFDFE" stroke="#2F4E88" stroke-width="1.1"/>
 <path d="M3 8L6.5 4.5L10 8Z" fill="#DDE6F4"/>
 <path d="M4 4C4 1.5 6 0.5 7.5 1.5L8 4" stroke="#2F4E88" fill="none"/>
 <path d="M10.5 7C13.5 7 15 9 15 11.5C15 12.5 14 13 13.5 12C13 11 13.5 9.5 11.5 9Z" fill="#3A78D8" stroke="#2A5BB0" stroke-width="0.6"/>
 <rect x="0" y="15" width="16" height="2" fill="#C9CCE0"/>
</svg>
<div class="arr" style="left:433px;top:172px"></div>
<div style="position:absolute;left:446px;top:162px;font:bold 17px 'Liberation Serif',serif;color:#2A4C9A">A</div>
<div style="position:absolute;left:445px;top:178px;width:16px;height:4px;background:#E8141A"></div>
<div class="arr" style="left:467px;top:172px"></div>
<svg style="position:absolute;left:481px;top:166px" width="14" height="14">
 <path d="M0.5 0V12M6.5 0V12M12.5 0V12M0 0.5H13M0 6.5H13" stroke="#555" stroke-dasharray="1 1"/>
 <path d="M0 12.5H13" stroke="#111"/>
</svg>
<div class="arr" style="left:501px;top:172px"></div>
<svg style="position:absolute;left:512px;top:166px" width="18" height="16">
 <text x="7" y="7" font-family="Liberation Sans" font-weight="bold" font-size="9" fill="#111">.0</text>
 <text x="3" y="15" font-family="Liberation Sans" font-weight="bold" font-size="9" fill="#111">.00</text>
 <path d="M1 4H7M1 4L3.5 2M1 4L3.5 6" stroke="#3A6ED0" stroke-width="1.3" fill="none"/>
</svg>
<svg style="position:absolute;left:535px;top:166px" width="18" height="16">
 <text x="3" y="7" font-family="Liberation Sans" font-weight="bold" font-size="9" fill="#111">.00</text>
 <text x="8" y="15" font-family="Liberation Sans" font-weight="bold" font-size="9" fill="#111">.0</text>
 <path d="M1 12H7M7 12L4.5 10M7 12L4.5 14" stroke="#3A6ED0" stroke-width="1.3" fill="none"/>
</svg>
<svg style="position:absolute;left:557px;top:165px" width="16" height="16">
 <path d="M0.5 8.5L6.5 4L11.5 9.5L7 15Z" fill="#E3CB5C" stroke="#9C8430"/>
 <path d="M2.5 9L7 13" stroke="#F8EBAA" stroke-width="1.5"/>
 <path d="M6.5 4L9 2L13 6L11.5 9.5Z" fill="#B0B0B8" stroke="#707078"/>
 <path d="M10 3L13 0.5L15.5 3L13 6Z" fill="#6E5CC0" stroke="#4A3A90"/>
</svg>

<!-- CONTEXT MENU -->
<div style="position:absolute;left:340px;top:202px;width:201px;height:354px;background:#FFFFFF;border:1px solid #C5C9CF;box-sizing:border-box;box-shadow:2px 3px 3px rgba(0,0,0,0.15)"></div>
<div style="position:absolute;left:341px;top:203px;width:25px;height:352px;background:#FBFBFC"></div>
<div style="position:absolute;left:366px;top:203px;width:1px;height:352px;background:#E2E4E7"></div>
<div style="position:absolute;left:368px;top:248px;width:170px;height:17px;background:#EDEFF2"></div>
<div class="sep" style="top:318px"></div>
<div class="sep" style="top:389px"></div>
<div class="sep" style="top:437px"></div>
<div class="sep" style="top:463px"></div>
<div style="position:absolute;left:342px;top:440px;width:197px;height:21px;border:1px solid #E5C365;border-radius:2px;box-sizing:border-box;background:linear-gradient(#FFF6D4,#FCE7A5 50%,#F8D978 51%,#FBE9AC)"></div>
<div class="mi" style="top:207px">Cu<u>t</u></div>
<div class="mi" style="top:229px"><u>C</u>opy</div>
<div class="mi" style="top:250px;font-weight:bold">Paste Options:</div>
<div class="mi" style="top:299px">Paste <u>S</u>pecial...</div>
<div class="mi" style="top:325px"><u>I</u>nsert...</div>
<div class="mi" style="top:347px"><u>D</u>elete...</div>
<div class="mi" style="top:369px">Clear Co<u>n</u>tents</div>
<div class="mi" style="top:395px">Filt<u>e</u>r</div>
<div class="mi" style="top:417px">S<u>o</u>rt</div>
<div class="mi" style="top:443px">Insert Co<u>m</u>ment</div>
<div class="mi" style="top:469px"><u>F</u>ormat Cells...</div>
<div class="mi" style="top:491px">Pic<u>k</u> From Drop-down List...</div>
<div class="mi" style="top:513px">Define N<u>a</u>me...</div>
<div class="mi" style="top:535px">Hyper<u>l</u>ink...</div>
<svg style="position:absolute;left:525px;top:399px" width="5" height="8"><path d="M0 0L4 4L0 8Z" fill="#707070"/></svg>
<svg style="position:absolute;left:525px;top:421px" width="5" height="8"><path d="M0 0L4 4L0 8Z" fill="#707070"/></svg>
<!-- menu icons -->
<svg style="position:absolute;left:347px;top:207px" width="14" height="16">
 <path d="M3.5 1L7 9M10.5 1L7 9" stroke="#6C7078" stroke-width="1.5" fill="none"/>
 <ellipse cx="4" cy="12" rx="2.6" ry="2.8" fill="#fff" stroke="#2846A8" stroke-width="2"/>
 <ellipse cx="10" cy="12" rx="2.6" ry="2.8" fill="#fff" stroke="#2846A8" stroke-width="2"/>
</svg>
<svg style="position:absolute;left:345px;top:230px" width="16" height="14">
 <path d="M0.5 0.5H6L8.5 3V10.5H0.5Z" fill="#FFFFFF" stroke="#4A6EB0"/>
 <path d="M2 3.5H6M2 5.5H7M2 7.5H7" stroke="#4A7AD0"/>
 <path d="M6.5 4.5H12L15.5 8V13.5H6.5Z" fill="#FFFFFF" stroke="#2E55A0"/>
 <path d="M12 4.5V8H15.5" fill="#DDE6F5" stroke="#2E55A0"/>
 <path d="M8 7.5H11M8 9.5H14M8 11.5H14" stroke="#2F6AD0"/>
</svg>
<svg style="position:absolute;left:346px;top:251px" width="16" height="15">
 <rect x="0.5" y="2.5" width="11" height="11" fill="#F0B85A" stroke="#B07A25"/>
 <rect x="3" y="1" width="6" height="3" fill="#ddd" stroke="#666" stroke-width="0.8"/>
 <rect x="6.5" y="7.5" width="9" height="7" fill="#F4F6F9" stroke="#667"/>
 <path d="M8 10H14M8 12H14" stroke="#8899AA"/>
</svg>
<div style="position:absolute;left:371px;top:270px;width:21px;height:21px;border:1px solid #D9B26A;border-radius:2px;background:linear-gradient(#FCE7BF,#F7D59A);box-sizing:border-box"></div>
<div style="position:absolute;left:377px;top:268px;width:8px;height:3px;background:#eee;border:1px solid #888"></div>
<div style="position:absolute;left:371px;top:273px;width:21px;text-align:center;font:bold 15px 'Liberation Sans',sans-serif;color:#111">A</div>
<svg style="position:absolute;left:345px;top:443px" width="17" height="14">
 <rect x="1.5" y="2.5" width="14" height="11" fill="#D8BD5A" stroke="#9A7E2A"/>
 <path d="M2 3H15" stroke="#F2E19A"/>
 <path d="M1 1L4 4M1 4L4 1" stroke="#FFF8C0" stroke-width="0.8"/>
</svg>
<svg style="position:absolute;left:345px;top:468px" width="17" height="16">
 <rect x="0.5" y="5.5" width="13" height="10" fill="#E6EEF8" stroke="#5A7AAE"/>
 <path d="M2 8H11M2 10.5H11M2 13H11" stroke="#6A8BC8"/>
 <path d="M5 5L10 1L15 4L12 8" fill="#E6C964" stroke="#A58A2E"/>
 <path d="M13 2L16 0" stroke="#3A9A3A" stroke-width="2"/>
</svg>
<svg style="position:absolute;left:345px;top:535px" width="18" height="17">
 <circle cx="8" cy="7" r="6.5" fill="#3C8FD8"/>
 <path d="M4 3C6 4 7 6 5 8C4 9 5 11 6 12M9 1C10 3 12 3 13 5C11 6 10 8 11 10" fill="#5BB14A" stroke="#4A9A3A" stroke-width="1.2"/>
 <rect x="2.5" y="11.5" width="7" height="4" rx="2" fill="none" stroke="#5A6A80" stroke-width="1.3"/>
 <rect x="8.5" y="11.5" width="7" height="4" rx="2" fill="none" stroke="#5A6A80" stroke-width="1.3"/>
</svg>

</body></html>
